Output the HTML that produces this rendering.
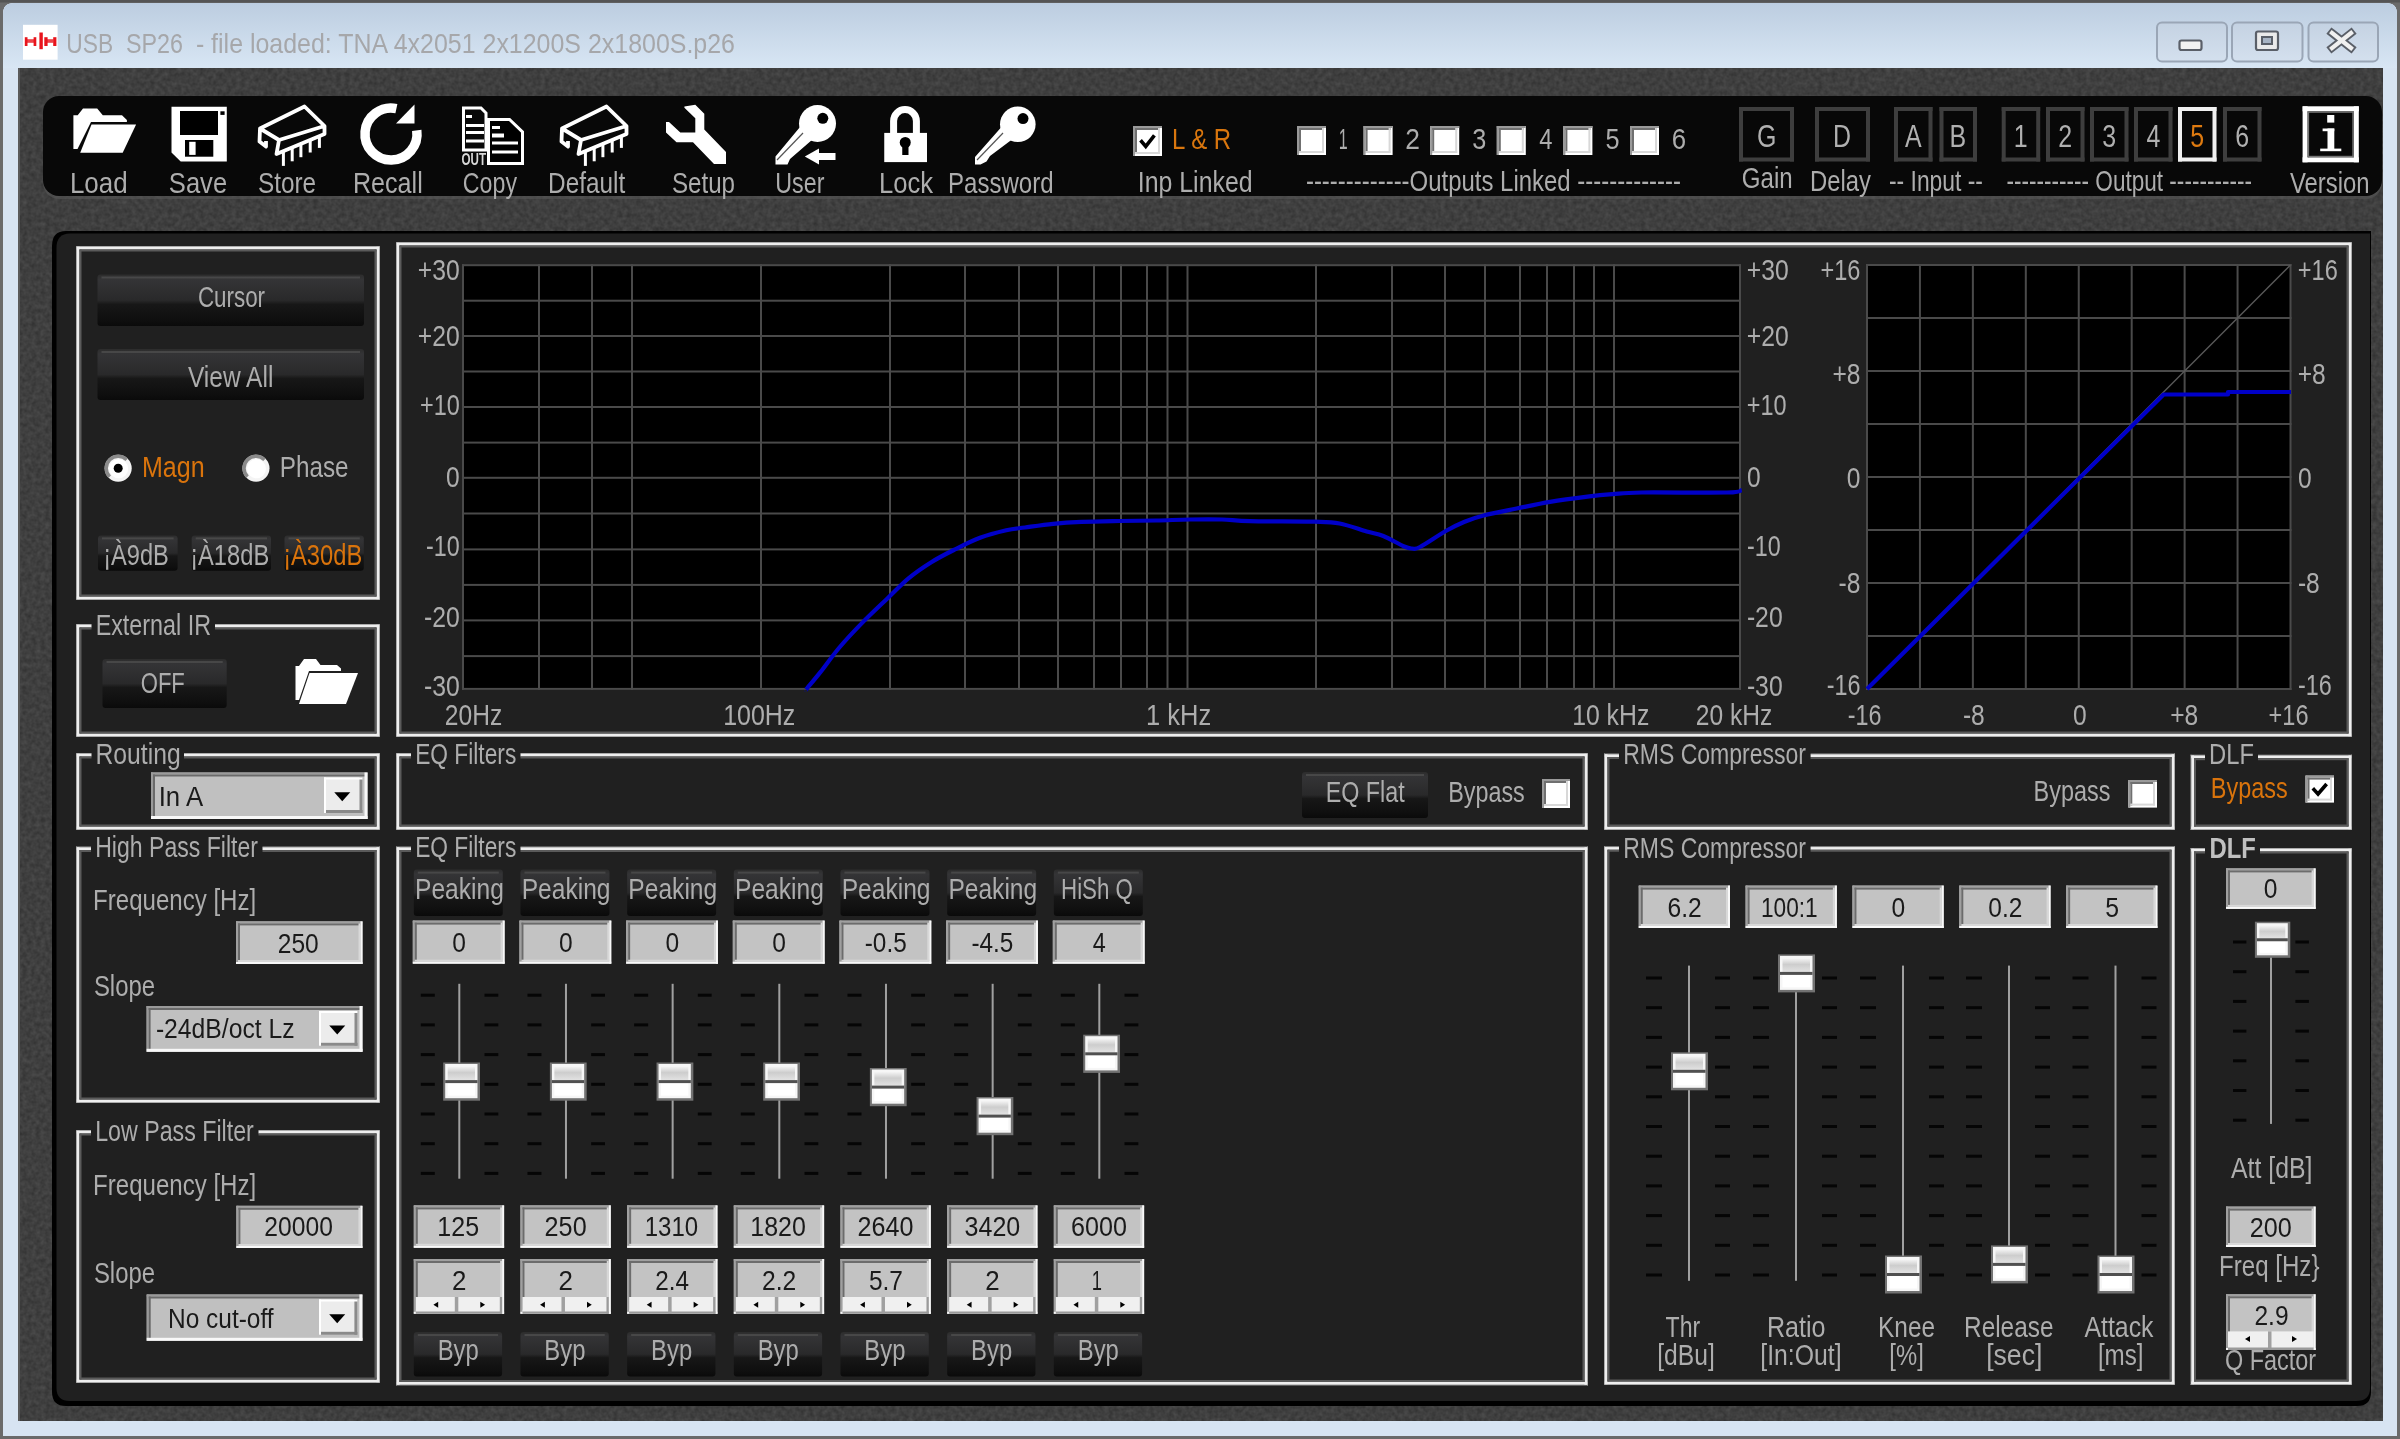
<!DOCTYPE html>
<html><head><meta charset="utf-8"><title>USB SP26</title>
<style>html,body{margin:0;padding:0;background:#7a7a7a;overflow:hidden}svg{display:block;will-change:transform}text{font-family:"Liberation Sans",sans-serif}</style>
</head><body>
<svg width="2400" height="1439" viewBox="0 0 2400 1439">
<defs>
<linearGradient id="gtitle" x1="0" y1="0" x2="0" y2="1"><stop offset="0" stop-color="#bccde0"/><stop offset="1" stop-color="#d8e6f4"/></linearGradient>
<linearGradient id="gtbtn" x1="0" y1="0" x2="0" y2="1"><stop offset="0" stop-color="#c4d2e2"/><stop offset="1" stop-color="#d4e0ee"/></linearGradient>
<linearGradient id="gbtn" x1="0" y1="0" x2="0" y2="1"><stop offset="0" stop-color="#2c2c2c"/><stop offset="0.1" stop-color="#343436"/><stop offset="0.5" stop-color="#29292a"/><stop offset="0.58" stop-color="#171717"/><stop offset="0.88" stop-color="#0f0f0f"/><stop offset="1" stop-color="#0a0a0a"/></linearGradient>
<linearGradient id="gthumb" x1="0" y1="0" x2="0" y2="1"><stop offset="0" stop-color="#f4f4f4"/><stop offset="0.45" stop-color="#cdcdcd"/><stop offset="1" stop-color="#e2e2e2"/></linearGradient>
<filter id="noise" x="0" y="0" width="100%" height="100%"><feTurbulence type="fractalNoise" baseFrequency="0.22" numOctaves="2" seed="3"/><feColorMatrix type="matrix" values="0 0 0 0 0  0 0 0 0 0  0 0 0 0 0  0 0 0 -1.2 1.1"/></filter>
</defs>
<rect x="0" y="0" width="2400" height="1439" fill="#6a6a6a"/>
<rect x="0" y="0" width="2400" height="2.5" fill="#545454"/>
<path d="M3,14 Q3,3 14,3 L2386,3 Q2397,3 2397,14 L2397,1436 L3,1436 Z" fill="#d7e4f2"/>
<path d="M4,14 Q4,4 14,4 L2386,4 Q2396,4 2396,14" fill="none" stroke="#dfe8f1" stroke-width="1.5"/>
<path d="M3,14 Q3,3 14,3 L2386,3 Q2397,3 2397,14 L2397,68 L3,68 Z" fill="url(#gtitle)"/>
<rect x="18" y="68" width="2365" height="1353" fill="#4d4d4d"/>
<rect x="18" y="68" width="2365" height="1353" fill="#000"  filter="url(#noise)" opacity="0.35"/>
<rect x="18" y="68" width="2" height="1353" fill="#5a5a5a"/>
<rect x="23" y="24.8" width="34.6" height="34.9" fill="#ffffff"/>
<rect x="24.8" y="37.2" width="2.7" height="8.8" fill="#e8141c"/>
<rect x="27" y="39.2" width="7" height="3.6" fill="#e8141c" opacity="0.8"/>
<rect x="33.6" y="37.2" width="2.7" height="8.8" fill="#e8141c"/>
<rect x="39.4" y="32.5" width="3.4" height="16.7" fill="#e8141c"/>
<rect x="44.3" y="37.2" width="3.3" height="8.8" fill="#e8141c"/>
<rect x="47" y="39.2" width="6.5" height="3.6" fill="#e8141c" opacity="0.8"/>
<rect x="53.2" y="37.2" width="3.2" height="8.8" fill="#e8141c"/>
<text x="66.29" y="52.5" font-size="27.54" fill="#a6a7aa" textLength="46.88" lengthAdjust="spacingAndGlyphs">USB</text>
<text x="125.95" y="52.5" font-size="27.54" fill="#a6a7aa" textLength="57.01" lengthAdjust="spacingAndGlyphs">SP26</text>
<text x="195.88" y="52.5" font-size="27.54" fill="#a6a7aa" textLength="539.1" lengthAdjust="spacingAndGlyphs">- file loaded: TNA 4x2051 2x1200S 2x1800S.p26</text>
<rect x="2157" y="22.5" width="70" height="39" rx="5" fill="url(#gtbtn)" stroke="#9aa6b6" stroke-width="2"/>
<rect x="2232" y="22.5" width="70.5" height="39" rx="5" fill="url(#gtbtn)" stroke="#9aa6b6" stroke-width="2"/>
<rect x="2308.5" y="22.5" width="69.5" height="39" rx="5" fill="url(#gtbtn)" stroke="#9aa6b6" stroke-width="2"/>
<rect x="2179.5" y="40.5" width="22" height="9.5" rx="2" fill="#f2f2f2" stroke="#5a5f68" stroke-width="2.2"/>
<rect x="2256" y="31.5" width="22" height="18.5" rx="2" fill="#eaeaea" stroke="#5a5f68" stroke-width="2.2"/>
<rect x="2262" y="37" width="10" height="7" fill="#a8b4c4" stroke="#5a5f68" stroke-width="2"/>
<path d="M2332,33 L2351,48 M2351,33 L2332,48" fill="none" stroke="#5a5f68" stroke-width="8" stroke-linecap="square"/>
<path d="M2332,33 L2351,48 M2351,33 L2332,48" fill="none" stroke="#f0f0f0" stroke-width="4.2" stroke-linecap="square"/>
<rect x="43" y="96" width="2339" height="103" rx="16" fill="#5a5a5a" opacity="0.5"/>
<rect x="43" y="96" width="2339" height="100" rx="16" fill="#080808"/>
<polygon points="73.4,115.2 77.7,115.2 83,108.5 97.2,108.5 102.8,115.2 122,115.2 126.9,120 126.9,122 91,122 77.5,149 73.4,149" fill="#ffffff"/>
<polygon points="91.5,124.5 136.1,124.5 122.7,152.8 80.2,152.8" fill="#ffffff"/>
<text x="69.92" y="193" font-size="28.99" fill="#adadad" textLength="57.76" lengthAdjust="spacingAndGlyphs">Load</text>
<polygon points="171.5,106.7 226.8,106.7 226.8,161.6 180.7,161.6 171.5,152.4" fill="#ffffff"/>
<rect x="180" y="111" width="38" height="24" fill="#000"/>
<rect x="220.4" y="111.3" width="4.2" height="3.6" fill="#000"/>
<rect x="185" y="140" width="28.3" height="16.7" fill="#000"/>
<rect x="189.2" y="141.8" width="6.4" height="13.1" fill="#ffffff"/>
<text x="168.85" y="193" font-size="28.99" fill="#adadad" textLength="58.29" lengthAdjust="spacingAndGlyphs">Save</text>
<path d="M260,128.5 L304.5,106.5 L324.5,126 L279,140 Z M279,140 L276.5,154 L324.5,134 L324.5,126 M260,128.5 L259.5,141.5 L266,146.5 L266,141" fill="none" stroke="#ffffff" stroke-width="3.8" stroke-linejoin="round"/>
<line x1="283.4" y1="151.28" x2="283.4" y2="165.9" stroke="#ffffff" stroke-width="3"/>
<line x1="292.2" y1="147.81" x2="292.2" y2="161.3" stroke="#ffffff" stroke-width="3"/>
<line x1="300.9" y1="144.39" x2="300.9" y2="157.2" stroke="#ffffff" stroke-width="3"/>
<line x1="310.2" y1="140.72" x2="310.2" y2="152.5" stroke="#ffffff" stroke-width="3"/>
<line x1="319.4" y1="137.1" x2="319.4" y2="147.9" stroke="#ffffff" stroke-width="3"/>
<text x="257.9" y="193" font-size="28.99" fill="#adadad" textLength="58.2" lengthAdjust="spacingAndGlyphs">Store</text>
<path d="M416.75,130.38 A26,26 0 1 1 396.41,108.57" fill="none" stroke="#ffffff" stroke-width="9.5"/>
<polygon points="396,123.5 414.5,123.5 414.5,104.5" fill="#ffffff"/>
<text x="352.99" y="193" font-size="28.99" fill="#adadad" textLength="69.74" lengthAdjust="spacingAndGlyphs">Recall</text>
<path d="M463.5,108 L481,108 L486,113 L486,150 L463.5,150 Z" fill="none" stroke="#ffffff" stroke-width="3"/>
<line x1="466" y1="116.5" x2="472" y2="116.5" stroke="#ffffff" stroke-width="3"/>
<line x1="466" y1="125.5" x2="484" y2="125.5" stroke="#ffffff" stroke-width="3"/>
<line x1="466" y1="132.5" x2="484" y2="132.5" stroke="#ffffff" stroke-width="3"/>
<line x1="466" y1="141" x2="484" y2="141" stroke="#ffffff" stroke-width="3"/>
<text x="461.53" y="164.8" font-size="15.94" fill="#d8d8d8" font-weight="bold" textLength="24.59" lengthAdjust="spacingAndGlyphs">OUT</text>
<path d="M488.5,119.5 L509.5,119.5 L522.5,132 L522.5,163.5 L488.5,163.5 Z" fill="#000" stroke="#ffffff" stroke-width="3"/>
<line x1="492" y1="127.5" x2="500" y2="127.5" stroke="#ffffff" stroke-width="3"/>
<line x1="492" y1="135.5" x2="504" y2="135.5" stroke="#ffffff" stroke-width="4"/>
<line x1="492" y1="143" x2="518" y2="143" stroke="#ffffff" stroke-width="3"/>
<line x1="492" y1="152" x2="518" y2="152" stroke="#ffffff" stroke-width="3"/>
<text x="462.84" y="193" font-size="28.99" fill="#adadad" textLength="54.15" lengthAdjust="spacingAndGlyphs">Copy</text>
<path d="M562,128.5 L606.5,106.5 L626.5,126 L581,140 Z M581,140 L578.5,154 L626.5,134 L626.5,126 M562,128.5 L561.5,141.5 L568,146.5 L568,141" fill="none" stroke="#ffffff" stroke-width="3.8" stroke-linejoin="round"/>
<line x1="585.4" y1="151.28" x2="585.4" y2="165.9" stroke="#ffffff" stroke-width="3"/>
<line x1="594.2" y1="147.81" x2="594.2" y2="161.3" stroke="#ffffff" stroke-width="3"/>
<line x1="602.9" y1="144.39" x2="602.9" y2="157.2" stroke="#ffffff" stroke-width="3"/>
<line x1="612.2" y1="140.72" x2="612.2" y2="152.5" stroke="#ffffff" stroke-width="3"/>
<line x1="621.4" y1="137.1" x2="621.4" y2="147.9" stroke="#ffffff" stroke-width="3"/>
<text x="548.05" y="193" font-size="28.99" fill="#adadad" textLength="77.16" lengthAdjust="spacingAndGlyphs">Default</text>
<polygon points="684.4,106.6 695.3,104.75 704.3,113.75 704.3,129.5 726,152 726,164 714,164 693,142.3 676.5,142.3 666,132.5 666,122 669,122 680.3,132.5 695.3,132.5 695.3,118.25 684.4,107.75" fill="#ffffff"/>
<text x="671.91" y="193" font-size="28.99" fill="#adadad" textLength="63.13" lengthAdjust="spacingAndGlyphs">Setup</text>
<circle cx="817.5" cy="123.5" r="18.5" fill="#fff"/>
<circle cx="822.8" cy="118.3" r="5.5" fill="#000"/>
<polygon points="800,127 812.5,139.5 790,159 787.5,164.5 775.5,164.5 775.5,156.5" fill="#ffffff"/>
<line x1="777" y1="160" x2="803" y2="133" stroke="#555" stroke-width="1.2"/>
<polygon points="804.8,156.5 819,148.5 819,164.5" fill="#ffffff"/>
<rect x="818" y="153" width="17.5" height="7" fill="#ffffff"/>
<text x="775.25" y="193" font-size="28.99" fill="#adadad" textLength="49.13" lengthAdjust="spacingAndGlyphs">User</text>
<rect x="884.25" y="132.9" width="42.75" height="29.2" fill="#ffffff"/>
<path d="M893.6,133 L893.6,121 A11.4,11.4 0 0 1 916.4,121 L916.4,133" fill="none" stroke="#ffffff" stroke-width="7"/>
<circle cx="905.25" cy="142.5" r="5.5" fill="#000"/>
<rect x="902.25" y="142" width="6.25" height="13" fill="#000"/>
<text x="878.95" y="193" font-size="28.99" fill="#adadad" textLength="54.11" lengthAdjust="spacingAndGlyphs">Lock</text>
<circle cx="1017.8" cy="124.3" r="17.8" fill="#fff"/>
<circle cx="1023" cy="118.6" r="5.5" fill="#000"/>
<polygon points="1001,127.5 1012,139.5 990,156 986.5,161.5 980.5,164.5 975,164.5 975,157" fill="#ffffff"/>
<line x1="977" y1="160" x2="1003" y2="133" stroke="#555" stroke-width="1.2"/>
<text x="948.08" y="193" font-size="28.99" fill="#adadad" textLength="105.5" lengthAdjust="spacingAndGlyphs">Password</text>
<rect x="1133" y="126" width="29" height="30" fill="#ffffff"/>
<rect x="1133" y="126" width="29" height="2" fill="#9a9a9a"/>
<rect x="1133" y="126" width="2" height="30" fill="#9a9a9a"/>
<rect x="1135" y="128" width="25" height="2" fill="#707070"/>
<rect x="1135" y="128" width="2" height="26" fill="#707070"/>
<rect x="1135" y="152" width="25" height="2" fill="#d8d8d8"/>
<rect x="1158" y="128" width="2" height="26" fill="#d8d8d8"/>
<path d="M1141.7,141.6 L1145.76,146.4 L1153.3,136.8" fill="none" stroke="#000" stroke-width="3.6" stroke-linecap="square"/>
<text x="1172.08" y="149" font-size="29.71" fill="#d9760e" textLength="59.09" lengthAdjust="spacingAndGlyphs">L &amp; R</text>
<text x="1137.76" y="191.6" font-size="28.99" fill="#adadad" textLength="114.85" lengthAdjust="spacingAndGlyphs">Inp Linked</text>
<rect x="1297" y="126" width="29" height="29" fill="#ffffff"/>
<rect x="1297" y="126" width="29" height="2" fill="#9a9a9a"/>
<rect x="1297" y="126" width="2" height="29" fill="#9a9a9a"/>
<rect x="1299" y="128" width="25" height="2" fill="#707070"/>
<rect x="1299" y="128" width="2" height="25" fill="#707070"/>
<rect x="1299" y="151" width="25" height="2" fill="#d8d8d8"/>
<rect x="1322" y="128" width="2" height="25" fill="#d8d8d8"/>
<text x="1338.79" y="149" font-size="29.71" fill="#adadad" textLength="8.95" lengthAdjust="spacingAndGlyphs">1</text>
<rect x="1363.6" y="126" width="29" height="29" fill="#ffffff"/>
<rect x="1363.6" y="126" width="29" height="2" fill="#9a9a9a"/>
<rect x="1363.6" y="126" width="2" height="29" fill="#9a9a9a"/>
<rect x="1365.6" y="128" width="25" height="2" fill="#707070"/>
<rect x="1365.6" y="128" width="2" height="25" fill="#707070"/>
<rect x="1365.6" y="151" width="25" height="2" fill="#d8d8d8"/>
<rect x="1388.6" y="128" width="2" height="25" fill="#d8d8d8"/>
<text x="1405.28" y="149" font-size="29.71" fill="#adadad" textLength="14.67" lengthAdjust="spacingAndGlyphs">2</text>
<rect x="1430.2" y="126" width="29" height="29" fill="#ffffff"/>
<rect x="1430.2" y="126" width="29" height="2" fill="#9a9a9a"/>
<rect x="1430.2" y="126" width="2" height="29" fill="#9a9a9a"/>
<rect x="1432.2" y="128" width="25" height="2" fill="#707070"/>
<rect x="1432.2" y="128" width="2" height="25" fill="#707070"/>
<rect x="1432.2" y="151" width="25" height="2" fill="#d8d8d8"/>
<rect x="1455.2" y="128" width="2" height="25" fill="#d8d8d8"/>
<text x="1472.19" y="149" font-size="29.71" fill="#adadad" textLength="14.05" lengthAdjust="spacingAndGlyphs">3</text>
<rect x="1496.8" y="126" width="29" height="29" fill="#ffffff"/>
<rect x="1496.8" y="126" width="29" height="2" fill="#9a9a9a"/>
<rect x="1496.8" y="126" width="2" height="29" fill="#9a9a9a"/>
<rect x="1498.8" y="128" width="25" height="2" fill="#707070"/>
<rect x="1498.8" y="128" width="2" height="25" fill="#707070"/>
<rect x="1498.8" y="151" width="25" height="2" fill="#d8d8d8"/>
<rect x="1521.8" y="128" width="2" height="25" fill="#d8d8d8"/>
<text x="1539.32" y="149" font-size="29.71" fill="#adadad" textLength="13.22" lengthAdjust="spacingAndGlyphs">4</text>
<rect x="1563.4" y="126" width="29" height="29" fill="#ffffff"/>
<rect x="1563.4" y="126" width="29" height="2" fill="#9a9a9a"/>
<rect x="1563.4" y="126" width="2" height="29" fill="#9a9a9a"/>
<rect x="1565.4" y="128" width="25" height="2" fill="#707070"/>
<rect x="1565.4" y="128" width="2" height="25" fill="#707070"/>
<rect x="1565.4" y="151" width="25" height="2" fill="#d8d8d8"/>
<rect x="1588.4" y="128" width="2" height="25" fill="#d8d8d8"/>
<text x="1605.39" y="149" font-size="29.71" fill="#adadad" textLength="14.05" lengthAdjust="spacingAndGlyphs">5</text>
<rect x="1630" y="126" width="29" height="29" fill="#ffffff"/>
<rect x="1630" y="126" width="29" height="2" fill="#9a9a9a"/>
<rect x="1630" y="126" width="2" height="29" fill="#9a9a9a"/>
<rect x="1632" y="128" width="25" height="2" fill="#707070"/>
<rect x="1632" y="128" width="2" height="25" fill="#707070"/>
<rect x="1632" y="151" width="25" height="2" fill="#d8d8d8"/>
<rect x="1655" y="128" width="2" height="25" fill="#d8d8d8"/>
<text x="1671.71" y="149" font-size="29.71" fill="#adadad" textLength="14.35" lengthAdjust="spacingAndGlyphs">6</text>
<text x="1305.92" y="190.6" font-size="28.99" fill="#adadad" textLength="375.12" lengthAdjust="spacingAndGlyphs">-------------Outputs Linked -------------</text>
<rect x="1739" y="107" width="55" height="4" fill="#3e3e3e"/>
<rect x="1739" y="157.5" width="55" height="4" fill="#3e3e3e"/>
<rect x="1739" y="107" width="4" height="54.5" fill="#3e3e3e"/>
<rect x="1790" y="107" width="4" height="54.5" fill="#3e3e3e"/>
<text x="1757.08" y="146.7" font-size="30.43" fill="#b0b0b0" textLength="19.41" lengthAdjust="spacingAndGlyphs">G</text>
<rect x="1815" y="107" width="55" height="4" fill="#3e3e3e"/>
<rect x="1815" y="157.5" width="55" height="4" fill="#3e3e3e"/>
<rect x="1815" y="107" width="4" height="54.5" fill="#3e3e3e"/>
<rect x="1866" y="107" width="4" height="54.5" fill="#3e3e3e"/>
<text x="1833.08" y="146.7" font-size="30.43" fill="#b0b0b0" textLength="18.02" lengthAdjust="spacingAndGlyphs">D</text>
<rect x="1894" y="107" width="38.5" height="4" fill="#3e3e3e"/>
<rect x="1894" y="157.5" width="38.5" height="4" fill="#3e3e3e"/>
<rect x="1894" y="107" width="4" height="54.5" fill="#3e3e3e"/>
<rect x="1928.5" y="107" width="4" height="54.5" fill="#3e3e3e"/>
<text x="1904.95" y="146.7" font-size="30.43" fill="#b0b0b0" textLength="16.65" lengthAdjust="spacingAndGlyphs">A</text>
<rect x="1939.5" y="107" width="37.5" height="4" fill="#3e3e3e"/>
<rect x="1939.5" y="157.5" width="37.5" height="4" fill="#3e3e3e"/>
<rect x="1939.5" y="107" width="4" height="54.5" fill="#3e3e3e"/>
<rect x="1973" y="107" width="4" height="54.5" fill="#3e3e3e"/>
<text x="1949.58" y="146.7" font-size="30.43" fill="#b0b0b0" textLength="16.65" lengthAdjust="spacingAndGlyphs">B</text>
<rect x="2001.7" y="107" width="38.5" height="4" fill="#3e3e3e"/>
<rect x="2001.7" y="157.5" width="38.5" height="4" fill="#3e3e3e"/>
<rect x="2001.7" y="107" width="4" height="54.5" fill="#3e3e3e"/>
<rect x="2036.2" y="107" width="4" height="54.5" fill="#3e3e3e"/>
<text x="2013.65" y="146.7" font-size="30.43" fill="#b0b0b0" textLength="13.88" lengthAdjust="spacingAndGlyphs">1</text>
<rect x="2046" y="107" width="38.5" height="4" fill="#3e3e3e"/>
<rect x="2046" y="157.5" width="38.5" height="4" fill="#3e3e3e"/>
<rect x="2046" y="107" width="4" height="54.5" fill="#3e3e3e"/>
<rect x="2080.5" y="107" width="4" height="54.5" fill="#3e3e3e"/>
<text x="2058.32" y="146.7" font-size="30.43" fill="#b0b0b0" textLength="13.88" lengthAdjust="spacingAndGlyphs">2</text>
<rect x="2090" y="107" width="38.5" height="4" fill="#3e3e3e"/>
<rect x="2090" y="157.5" width="38.5" height="4" fill="#3e3e3e"/>
<rect x="2090" y="107" width="4" height="54.5" fill="#3e3e3e"/>
<rect x="2124.5" y="107" width="4" height="54.5" fill="#3e3e3e"/>
<text x="2102.32" y="146.7" font-size="30.43" fill="#b0b0b0" textLength="13.88" lengthAdjust="spacingAndGlyphs">3</text>
<rect x="2134" y="107" width="38.5" height="4" fill="#3e3e3e"/>
<rect x="2134" y="157.5" width="38.5" height="4" fill="#3e3e3e"/>
<rect x="2134" y="107" width="4" height="54.5" fill="#3e3e3e"/>
<rect x="2168.5" y="107" width="4" height="54.5" fill="#3e3e3e"/>
<text x="2146.45" y="146.7" font-size="30.43" fill="#b0b0b0" textLength="13.88" lengthAdjust="spacingAndGlyphs">4</text>
<rect x="2178" y="107" width="38.5" height="4" fill="#f0f0f0"/>
<rect x="2178" y="157.5" width="38.5" height="4" fill="#f0f0f0"/>
<rect x="2178" y="107" width="4" height="54.5" fill="#f0f0f0"/>
<rect x="2212.5" y="107" width="4" height="54.5" fill="#f0f0f0"/>
<text x="2190.32" y="146.7" font-size="30.43" fill="#dd7a10" textLength="13.88" lengthAdjust="spacingAndGlyphs">5</text>
<rect x="2223" y="107" width="38.5" height="4" fill="#3e3e3e"/>
<rect x="2223" y="157.5" width="38.5" height="4" fill="#3e3e3e"/>
<rect x="2223" y="107" width="4" height="54.5" fill="#3e3e3e"/>
<rect x="2257.5" y="107" width="4" height="54.5" fill="#3e3e3e"/>
<text x="2235.2" y="146.7" font-size="30.43" fill="#b0b0b0" textLength="13.88" lengthAdjust="spacingAndGlyphs">6</text>
<text x="1741.8" y="188.4" font-size="28.99" fill="#adadad" textLength="50.82" lengthAdjust="spacingAndGlyphs">Gain</text>
<text x="1810.09" y="191" font-size="28.99" fill="#adadad" textLength="60.95" lengthAdjust="spacingAndGlyphs">Delay</text>
<text x="1888.97" y="191" font-size="28.99" fill="#adadad" textLength="93.99" lengthAdjust="spacingAndGlyphs">-- Input --</text>
<text x="2006.48" y="191" font-size="28.99" fill="#adadad" textLength="245.52" lengthAdjust="spacingAndGlyphs">----------- Output -----------</text>
<rect x="2302.6" y="106.3" width="56.2" height="5" fill="#ffffff"/>
<rect x="2302.6" y="157.3" width="56.2" height="5" fill="#ffffff"/>
<rect x="2302.6" y="106.3" width="5" height="56" fill="#ffffff"/>
<rect x="2353.8" y="106.3" width="5" height="56" fill="#ffffff"/>
<rect x="2307.6" y="111.3" width="46.2" height="1.5" fill="#777777"/>
<rect x="2307.6" y="155.8" width="46.2" height="1.5" fill="#777777"/>
<rect x="2307.6" y="111.3" width="1.5" height="46" fill="#777777"/>
<rect x="2352.3" y="111.3" width="1.5" height="46" fill="#777777"/>
<rect x="2327.2" y="115" width="7.1" height="7.6" fill="#ffffff"/>
<rect x="2327.5" y="128.5" width="6.8" height="21" fill="#ffffff"/>
<rect x="2322.6" y="128.5" width="11.7" height="2.7" fill="#ffffff"/>
<rect x="2320.2" y="148.6" width="21.1" height="2.6" fill="#ffffff"/>
<text x="2289.88" y="192.5" font-size="28.99" fill="#adadad" textLength="79.69" lengthAdjust="spacingAndGlyphs">Version</text>
<path d="M52,246 Q52,231 66,231 L2371,231 L2371,1392 Q2371,1406 2357,1406 L66,1406 Q52,1406 52,1392 Z" fill="#000"/>
<path d="M56.5,248 Q56.5,233.5 70,233.5 L2370,233.5 L2370,1388 Q2370,1401 2356,1401 L70,1401 Q56.5,1401 56.5,1388 Z" fill="#202020"/>
<rect x="76" y="246" width="304" height="1" fill="#9a9a9a"/>
<rect x="76" y="599" width="304" height="1" fill="#9a9a9a"/>
<rect x="76" y="246" width="1" height="354" fill="#9a9a9a"/>
<rect x="379" y="246" width="1" height="354" fill="#9a9a9a"/>
<rect x="76.8" y="246.8" width="302.4" height="2.7" fill="#eeeeee"/>
<rect x="76.8" y="596.5" width="302.4" height="2.7" fill="#eeeeee"/>
<rect x="76.8" y="246.8" width="2.7" height="352.4" fill="#eeeeee"/>
<rect x="376.5" y="246.8" width="2.7" height="352.4" fill="#eeeeee"/>
<rect x="79.5" y="249.5" width="297" height="2" fill="#5a5a5a"/>
<rect x="79.5" y="594.5" width="297" height="2" fill="#5a5a5a"/>
<rect x="79.5" y="249.5" width="2" height="347" fill="#5a5a5a"/>
<rect x="374.5" y="249.5" width="2" height="347" fill="#5a5a5a"/>
<rect x="97.5" y="274.5" width="266.5" height="51.5" rx="3" fill="url(#gbtn)"/>
<rect x="101.5" y="276.5" width="258.5" height="2" fill="#4a4a4a" opacity="0.9"/>
<text x="197.88" y="306.6" font-size="28.99" fill="#adadad" textLength="67.17" lengthAdjust="spacingAndGlyphs">Cursor</text>
<rect x="97.5" y="349" width="266.5" height="51" rx="3" fill="url(#gbtn)"/>
<rect x="101.5" y="351" width="258.5" height="2" fill="#4a4a4a" opacity="0.9"/>
<text x="187.88" y="386.6" font-size="28.99" fill="#adadad" textLength="85.51" lengthAdjust="spacingAndGlyphs">View All</text>
<circle cx="118.2" cy="468.2" r="13.5" fill="#f4f4f4"/>
<path d="M109.7,476.7 A12,12 0 0 1 126.7,459.7" stroke="#8a8a8a" stroke-width="3.5" fill="none"/>
<circle cx="118.7" cy="468.7" r="9.5" fill="#ffffff"/>
<circle cx="118.2" cy="468.2" r="4.5" fill="#000"/>
<circle cx="256" cy="468.2" r="13.5" fill="#f4f4f4"/>
<path d="M247.5,476.7 A12,12 0 0 1 264.5,459.7" stroke="#8a8a8a" stroke-width="3.5" fill="none"/>
<circle cx="256.5" cy="468.7" r="9.5" fill="#ffffff"/>
<text x="142" y="477.4" font-size="28.99" fill="#da740c" textLength="62.67" lengthAdjust="spacingAndGlyphs">Magn</text>
<text x="279.76" y="477.4" font-size="28.99" fill="#adadad" textLength="68.85" lengthAdjust="spacingAndGlyphs">Phase</text>
<rect x="98" y="535.4" width="79.6" height="35.4" rx="3" fill="url(#gbtn)"/>
<rect x="102" y="537.4" width="71.6" height="2" fill="#4a4a4a" opacity="0.9"/>
<text x="103.16" y="564.5" font-size="29.71" fill="#adadad" textLength="65.73" lengthAdjust="spacingAndGlyphs">¡À9dB</text>
<rect x="191.7" y="535.4" width="79.3" height="35.4" rx="3" fill="url(#gbtn)"/>
<rect x="195.7" y="537.4" width="71.3" height="2" fill="#4a4a4a" opacity="0.9"/>
<text x="190.16" y="564.5" font-size="29.71" fill="#adadad" textLength="79.04" lengthAdjust="spacingAndGlyphs">¡À18dB</text>
<rect x="284.5" y="535.4" width="79.3" height="35.4" rx="3" fill="url(#gbtn)"/>
<rect x="288.5" y="537.4" width="71.3" height="2" fill="#4a4a4a" opacity="0.9"/>
<text x="283.16" y="564.5" font-size="29.71" fill="#da740c" textLength="79.04" lengthAdjust="spacingAndGlyphs">¡À30dB</text>
<rect x="76" y="624" width="15.5" height="1" fill="#9a9a9a"/>
<rect x="215" y="624" width="165" height="1" fill="#9a9a9a"/>
<rect x="76" y="736" width="304" height="1" fill="#9a9a9a"/>
<rect x="76" y="624" width="1" height="113" fill="#9a9a9a"/>
<rect x="379" y="624" width="1" height="113" fill="#9a9a9a"/>
<rect x="76.8" y="624.8" width="14.7" height="2.7" fill="#eeeeee"/>
<rect x="215" y="624.8" width="164.2" height="2.7" fill="#eeeeee"/>
<rect x="76.8" y="733.5" width="302.4" height="2.7" fill="#eeeeee"/>
<rect x="76.8" y="624.8" width="2.7" height="111.4" fill="#eeeeee"/>
<rect x="376.5" y="624.8" width="2.7" height="111.4" fill="#eeeeee"/>
<rect x="79.5" y="627.5" width="12" height="2" fill="#5a5a5a"/>
<rect x="215" y="627.5" width="161.5" height="2" fill="#5a5a5a"/>
<rect x="79.5" y="731.5" width="297" height="2" fill="#5a5a5a"/>
<rect x="79.5" y="627.5" width="2" height="106" fill="#5a5a5a"/>
<rect x="374.5" y="627.5" width="2" height="106" fill="#5a5a5a"/>
<text x="95.63" y="635" font-size="28.99" fill="#adadad" textLength="115.45" lengthAdjust="spacingAndGlyphs">External IR</text>
<rect x="102.5" y="659" width="124.2" height="49" rx="3" fill="url(#gbtn)"/>
<rect x="106.5" y="661" width="116.2" height="2" fill="#4a4a4a" opacity="0.9"/>
<text x="140.71" y="692.5" font-size="28.99" fill="#adadad" textLength="44.17" lengthAdjust="spacingAndGlyphs">OFF</text>
<polygon points="295.5,666 299,666 304,659 316,659 320.5,665 337,665 341,668.5 341,671 309,671 299,700 295.5,700" fill="#fff"/>
<polygon points="309.5,673 358,673 346,704 299,704" fill="#fff"/>
<rect x="76" y="753" width="15.5" height="1" fill="#9a9a9a"/>
<rect x="184" y="753" width="196" height="1" fill="#9a9a9a"/>
<rect x="76" y="829" width="304" height="1" fill="#9a9a9a"/>
<rect x="76" y="753" width="1" height="77" fill="#9a9a9a"/>
<rect x="379" y="753" width="1" height="77" fill="#9a9a9a"/>
<rect x="76.8" y="753.8" width="14.7" height="2.7" fill="#eeeeee"/>
<rect x="184" y="753.8" width="195.2" height="2.7" fill="#eeeeee"/>
<rect x="76.8" y="826.5" width="302.4" height="2.7" fill="#eeeeee"/>
<rect x="76.8" y="753.8" width="2.7" height="75.4" fill="#eeeeee"/>
<rect x="376.5" y="753.8" width="2.7" height="75.4" fill="#eeeeee"/>
<rect x="79.5" y="756.5" width="12" height="2" fill="#5a5a5a"/>
<rect x="184" y="756.5" width="192.5" height="2" fill="#5a5a5a"/>
<rect x="79.5" y="824.5" width="297" height="2" fill="#5a5a5a"/>
<rect x="79.5" y="756.5" width="2" height="70" fill="#5a5a5a"/>
<rect x="374.5" y="756.5" width="2" height="70" fill="#5a5a5a"/>
<text x="95.52" y="764" font-size="28.99" fill="#adadad" textLength="85.13" lengthAdjust="spacingAndGlyphs">Routing</text>
<rect x="151" y="772.5" width="216.5" height="46.5" fill="#c0c0c0"/>
<rect x="151" y="772.5" width="216.5" height="2" fill="#9a9a9a"/>
<rect x="151" y="772.5" width="2" height="46.5" fill="#9a9a9a"/>
<rect x="153" y="774.5" width="212.5" height="2" fill="#6a6a6a"/>
<rect x="153" y="774.5" width="2" height="42.5" fill="#6a6a6a"/>
<rect x="151" y="816" width="216.5" height="3" fill="#f8f8f8"/>
<rect x="364.5" y="772.5" width="3" height="46.5" fill="#f8f8f8"/>
<rect x="324" y="777.5" width="38.5" height="35.5" fill="#ececec"/>
<rect x="324" y="810" width="38.5" height="3" fill="#8a8a8a"/>
<rect x="359.5" y="777.5" width="3" height="35.5" fill="#8a8a8a"/>
<rect x="324" y="777.5" width="2" height="35.5" fill="#ffffff"/>
<rect x="324" y="777.5" width="38.5" height="2" fill="#ffffff"/>
<polygon points="334.25,792.25 350.25,792.25 342.25,801.25" fill="#000"/>
<text x="158.68" y="806" font-size="28.26" fill="#1a1a1a" textLength="44.41" lengthAdjust="spacingAndGlyphs">In A</text>
<rect x="76" y="846.5" width="15" height="1" fill="#9a9a9a"/>
<rect x="262.5" y="846.5" width="117.5" height="1" fill="#9a9a9a"/>
<rect x="76" y="1102" width="304" height="1" fill="#9a9a9a"/>
<rect x="76" y="846.5" width="1" height="256.5" fill="#9a9a9a"/>
<rect x="379" y="846.5" width="1" height="256.5" fill="#9a9a9a"/>
<rect x="76.8" y="847.3" width="14.2" height="2.7" fill="#eeeeee"/>
<rect x="262.5" y="847.3" width="116.7" height="2.7" fill="#eeeeee"/>
<rect x="76.8" y="1099.5" width="302.4" height="2.7" fill="#eeeeee"/>
<rect x="76.8" y="847.3" width="2.7" height="254.9" fill="#eeeeee"/>
<rect x="376.5" y="847.3" width="2.7" height="254.9" fill="#eeeeee"/>
<rect x="79.5" y="850" width="11.5" height="2" fill="#5a5a5a"/>
<rect x="262.5" y="850" width="114" height="2" fill="#5a5a5a"/>
<rect x="79.5" y="1097.5" width="297" height="2" fill="#5a5a5a"/>
<rect x="79.5" y="850" width="2" height="249.5" fill="#5a5a5a"/>
<rect x="374.5" y="850" width="2" height="249.5" fill="#5a5a5a"/>
<text x="95.16" y="857" font-size="28.99" fill="#adadad" textLength="162.76" lengthAdjust="spacingAndGlyphs">High Pass Filter</text>
<text x="93.08" y="909.8" font-size="28.99" fill="#adadad" textLength="163.12" lengthAdjust="spacingAndGlyphs">Frequency [Hz]</text>
<rect x="236" y="921.4" width="126.5" height="42.6" fill="#c3c3c3"/>
<rect x="236" y="921.4" width="126.5" height="2" fill="#a0a0a0"/>
<rect x="236" y="921.4" width="2" height="42.6" fill="#a0a0a0"/>
<rect x="238" y="923.4" width="122.5" height="2" fill="#6c6c6c"/>
<rect x="238" y="923.4" width="2" height="38.6" fill="#6c6c6c"/>
<rect x="236" y="962" width="126.5" height="2" fill="#f8f8f8"/>
<rect x="360.5" y="921.4" width="2" height="42.6" fill="#f8f8f8"/>
<rect x="238" y="960" width="122.5" height="2" fill="#d8d8d8"/>
<rect x="358.5" y="923.4" width="2" height="38.6" fill="#d8d8d8"/>
<text x="277.77" y="952.6" font-size="28.26" fill="#1a1a1a" textLength="40.97" lengthAdjust="spacingAndGlyphs">250</text>
<text x="93.92" y="996" font-size="28.99" fill="#adadad" textLength="61.22" lengthAdjust="spacingAndGlyphs">Slope</text>
<rect x="146.6" y="1006" width="215.9" height="45.8" fill="#c0c0c0"/>
<rect x="146.6" y="1006" width="215.9" height="2" fill="#9a9a9a"/>
<rect x="146.6" y="1006" width="2" height="45.8" fill="#9a9a9a"/>
<rect x="148.6" y="1008" width="211.9" height="2" fill="#6a6a6a"/>
<rect x="148.6" y="1008" width="2" height="41.8" fill="#6a6a6a"/>
<rect x="146.6" y="1048.8" width="215.9" height="3" fill="#f8f8f8"/>
<rect x="359.5" y="1006" width="3" height="45.8" fill="#f8f8f8"/>
<rect x="319" y="1011" width="38.5" height="34.8" fill="#ececec"/>
<rect x="319" y="1042.8" width="38.5" height="3" fill="#8a8a8a"/>
<rect x="354.5" y="1011" width="3" height="34.8" fill="#8a8a8a"/>
<rect x="319" y="1011" width="2" height="34.8" fill="#ffffff"/>
<rect x="319" y="1011" width="38.5" height="2" fill="#ffffff"/>
<polygon points="329.25,1025.4 345.25,1025.4 337.25,1034.4" fill="#000"/>
<text x="155.89" y="1038" font-size="28.26" fill="#1a1a1a" textLength="138.83" lengthAdjust="spacingAndGlyphs">-24dB/oct Lz</text>
<rect x="76" y="1130" width="15" height="1" fill="#9a9a9a"/>
<rect x="258.5" y="1130" width="121.5" height="1" fill="#9a9a9a"/>
<rect x="76" y="1382" width="304" height="1" fill="#9a9a9a"/>
<rect x="76" y="1130" width="1" height="253" fill="#9a9a9a"/>
<rect x="379" y="1130" width="1" height="253" fill="#9a9a9a"/>
<rect x="76.8" y="1130.8" width="14.2" height="2.7" fill="#eeeeee"/>
<rect x="258.5" y="1130.8" width="120.7" height="2.7" fill="#eeeeee"/>
<rect x="76.8" y="1379.5" width="302.4" height="2.7" fill="#eeeeee"/>
<rect x="76.8" y="1130.8" width="2.7" height="251.4" fill="#eeeeee"/>
<rect x="376.5" y="1130.8" width="2.7" height="251.4" fill="#eeeeee"/>
<rect x="79.5" y="1133.5" width="11.5" height="2" fill="#5a5a5a"/>
<rect x="258.5" y="1133.5" width="118" height="2" fill="#5a5a5a"/>
<rect x="79.5" y="1377.5" width="297" height="2" fill="#5a5a5a"/>
<rect x="79.5" y="1133.5" width="2" height="246" fill="#5a5a5a"/>
<rect x="374.5" y="1133.5" width="2" height="246" fill="#5a5a5a"/>
<text x="95.14" y="1141" font-size="28.99" fill="#adadad" textLength="158.72" lengthAdjust="spacingAndGlyphs">Low Pass Filter</text>
<text x="93.08" y="1194.7" font-size="28.99" fill="#adadad" textLength="163.12" lengthAdjust="spacingAndGlyphs">Frequency [Hz]</text>
<rect x="236.4" y="1205.8" width="126" height="42.2" fill="#c3c3c3"/>
<rect x="236.4" y="1205.8" width="126" height="2" fill="#a0a0a0"/>
<rect x="236.4" y="1205.8" width="2" height="42.2" fill="#a0a0a0"/>
<rect x="238.4" y="1207.8" width="122" height="2" fill="#6c6c6c"/>
<rect x="238.4" y="1207.8" width="2" height="38.2" fill="#6c6c6c"/>
<rect x="236.4" y="1246" width="126" height="2" fill="#f8f8f8"/>
<rect x="360.4" y="1205.8" width="2" height="42.2" fill="#f8f8f8"/>
<rect x="238.4" y="1244" width="122" height="2" fill="#d8d8d8"/>
<rect x="358.4" y="1207.8" width="2" height="38.2" fill="#d8d8d8"/>
<text x="264.37" y="1236" font-size="28.26" fill="#1a1a1a" textLength="68.52" lengthAdjust="spacingAndGlyphs">20000</text>
<text x="93.92" y="1283.4" font-size="28.99" fill="#adadad" textLength="61.22" lengthAdjust="spacingAndGlyphs">Slope</text>
<rect x="146.7" y="1294.5" width="215.7" height="46.3" fill="#c0c0c0"/>
<rect x="146.7" y="1294.5" width="215.7" height="2" fill="#9a9a9a"/>
<rect x="146.7" y="1294.5" width="2" height="46.3" fill="#9a9a9a"/>
<rect x="148.7" y="1296.5" width="211.7" height="2" fill="#6a6a6a"/>
<rect x="148.7" y="1296.5" width="2" height="42.3" fill="#6a6a6a"/>
<rect x="146.7" y="1337.8" width="215.7" height="3" fill="#f8f8f8"/>
<rect x="359.4" y="1294.5" width="3" height="46.3" fill="#f8f8f8"/>
<rect x="319" y="1299.5" width="38.4" height="35.3" fill="#ececec"/>
<rect x="319" y="1331.8" width="38.4" height="3" fill="#8a8a8a"/>
<rect x="354.4" y="1299.5" width="3" height="35.3" fill="#8a8a8a"/>
<rect x="319" y="1299.5" width="2" height="35.3" fill="#ffffff"/>
<rect x="319" y="1299.5" width="38.4" height="2" fill="#ffffff"/>
<polygon points="329.2,1314.15 345.2,1314.15 337.2,1323.15" fill="#000"/>
<text x="168.04" y="1327.7" font-size="28.26" fill="#1a1a1a" textLength="105.58" lengthAdjust="spacingAndGlyphs">No cut-off</text>
<rect x="396" y="242" width="1956" height="1" fill="#9a9a9a"/>
<rect x="396" y="736" width="1956" height="1" fill="#9a9a9a"/>
<rect x="396" y="242" width="1" height="495" fill="#9a9a9a"/>
<rect x="2351" y="242" width="1" height="495" fill="#9a9a9a"/>
<rect x="396.8" y="242.8" width="1954.4" height="2.7" fill="#eeeeee"/>
<rect x="396.8" y="733.5" width="1954.4" height="2.7" fill="#eeeeee"/>
<rect x="396.8" y="242.8" width="2.7" height="493.4" fill="#eeeeee"/>
<rect x="2348.5" y="242.8" width="2.7" height="493.4" fill="#eeeeee"/>
<rect x="399.5" y="245.5" width="1949" height="2" fill="#5a5a5a"/>
<rect x="399.5" y="731.5" width="1949" height="2" fill="#5a5a5a"/>
<rect x="399.5" y="245.5" width="2" height="488" fill="#5a5a5a"/>
<rect x="2346.5" y="245.5" width="2" height="488" fill="#5a5a5a"/>
<rect x="462" y="265.2" width="1279" height="424.7" fill="#000"/>
<rect x="462" y="264.2" width="1279" height="2" fill="#4a4a4a"/>
<rect x="462" y="299.7" width="1279" height="2" fill="#4a4a4a"/>
<rect x="462" y="335" width="1279" height="2" fill="#4a4a4a"/>
<rect x="462" y="370.5" width="1279" height="2" fill="#4a4a4a"/>
<rect x="462" y="406" width="1279" height="2" fill="#4a4a4a"/>
<rect x="462" y="441.6" width="1279" height="2" fill="#4a4a4a"/>
<rect x="462" y="476.8" width="1279" height="2" fill="#4a4a4a"/>
<rect x="462" y="512.5" width="1279" height="2" fill="#4a4a4a"/>
<rect x="462" y="548.4" width="1279" height="2" fill="#4a4a4a"/>
<rect x="462" y="583.9" width="1279" height="2" fill="#4a4a4a"/>
<rect x="462" y="619.4" width="1279" height="2" fill="#4a4a4a"/>
<rect x="462" y="655.1" width="1279" height="2" fill="#4a4a4a"/>
<rect x="462" y="687.9" width="1279" height="2" fill="#4a4a4a"/>
<rect x="462" y="264.2" width="2" height="425.7" fill="#4a4a4a"/>
<rect x="538" y="264.2" width="2" height="425.7" fill="#4a4a4a"/>
<rect x="591" y="264.2" width="2" height="425.7" fill="#4a4a4a"/>
<rect x="631" y="264.2" width="2" height="425.7" fill="#4a4a4a"/>
<rect x="760" y="264.2" width="2" height="425.7" fill="#4a4a4a"/>
<rect x="889" y="264.2" width="2" height="425.7" fill="#4a4a4a"/>
<rect x="964" y="264.2" width="2" height="425.7" fill="#4a4a4a"/>
<rect x="1018" y="264.2" width="2" height="425.7" fill="#4a4a4a"/>
<rect x="1057" y="264.2" width="2" height="425.7" fill="#4a4a4a"/>
<rect x="1093" y="264.2" width="2" height="425.7" fill="#4a4a4a"/>
<rect x="1120" y="264.2" width="2" height="425.7" fill="#4a4a4a"/>
<rect x="1146" y="264.2" width="2" height="425.7" fill="#4a4a4a"/>
<rect x="1166.5" y="264.2" width="2" height="425.7" fill="#4a4a4a"/>
<rect x="1186.5" y="264.2" width="2" height="425.7" fill="#4a4a4a"/>
<rect x="1315" y="264.2" width="2" height="425.7" fill="#4a4a4a"/>
<rect x="1391" y="264.2" width="2" height="425.7" fill="#4a4a4a"/>
<rect x="1444" y="264.2" width="2" height="425.7" fill="#4a4a4a"/>
<rect x="1484" y="264.2" width="2" height="425.7" fill="#4a4a4a"/>
<rect x="1519" y="264.2" width="2" height="425.7" fill="#4a4a4a"/>
<rect x="1546" y="264.2" width="2" height="425.7" fill="#4a4a4a"/>
<rect x="1573" y="264.2" width="2" height="425.7" fill="#4a4a4a"/>
<rect x="1593" y="264.2" width="2" height="425.7" fill="#4a4a4a"/>
<rect x="1613" y="264.2" width="2" height="425.7" fill="#4a4a4a"/>
<rect x="1739" y="264.2" width="2" height="425.7" fill="#4a4a4a"/>
<text x="417.86" y="280" font-size="28.99" fill="#adadad" textLength="41.93" lengthAdjust="spacingAndGlyphs">+30</text>
<text x="1746.76" y="280" font-size="28.99" fill="#adadad" textLength="41.93" lengthAdjust="spacingAndGlyphs">+30</text>
<text x="417.86" y="346" font-size="28.99" fill="#adadad" textLength="41.93" lengthAdjust="spacingAndGlyphs">+20</text>
<text x="1746.76" y="346" font-size="28.99" fill="#adadad" textLength="41.93" lengthAdjust="spacingAndGlyphs">+20</text>
<text x="419.93" y="415" font-size="28.99" fill="#adadad" textLength="39.83" lengthAdjust="spacingAndGlyphs">+10</text>
<text x="1746.83" y="415" font-size="28.99" fill="#adadad" textLength="39.83" lengthAdjust="spacingAndGlyphs">+10</text>
<text x="446.12" y="486.7" font-size="28.99" fill="#adadad" textLength="13.67" lengthAdjust="spacingAndGlyphs">0</text>
<text x="1747.02" y="486.7" font-size="28.99" fill="#adadad" textLength="13.67" lengthAdjust="spacingAndGlyphs">0</text>
<text x="426.05" y="556" font-size="28.99" fill="#adadad" textLength="33.67" lengthAdjust="spacingAndGlyphs">-10</text>
<text x="1746.95" y="556" font-size="28.99" fill="#adadad" textLength="33.67" lengthAdjust="spacingAndGlyphs">-10</text>
<text x="423.99" y="627" font-size="28.99" fill="#adadad" textLength="35.79" lengthAdjust="spacingAndGlyphs">-20</text>
<text x="1746.89" y="627" font-size="28.99" fill="#adadad" textLength="35.79" lengthAdjust="spacingAndGlyphs">-20</text>
<text x="423.99" y="696" font-size="28.99" fill="#adadad" textLength="35.79" lengthAdjust="spacingAndGlyphs">-30</text>
<text x="1746.89" y="696" font-size="28.99" fill="#adadad" textLength="35.79" lengthAdjust="spacingAndGlyphs">-30</text>
<text x="444.77" y="724.5" font-size="28.99" fill="#adadad" textLength="57.45" lengthAdjust="spacingAndGlyphs">20Hz</text>
<text x="723.13" y="724.5" font-size="28.99" fill="#adadad" textLength="72.14" lengthAdjust="spacingAndGlyphs">100Hz</text>
<text x="1146.09" y="724.5" font-size="28.99" fill="#adadad" textLength="65.22" lengthAdjust="spacingAndGlyphs">1 kHz</text>
<text x="1572.14" y="724.5" font-size="28.99" fill="#adadad" textLength="77.16" lengthAdjust="spacingAndGlyphs">10 kHz</text>
<text x="1695.77" y="724.5" font-size="28.99" fill="#adadad" textLength="76.52" lengthAdjust="spacingAndGlyphs">20 kHz</text>
<path d="M806,689.5 C806.25,689.22 805.07,690.73 807.5,687.8 C809.93,684.87 815.28,678.62 820.6,671.9 C825.92,665.18 832.52,655.63 839.4,647.5 C846.28,639.37 853.78,631.38 861.9,623.1 C870.02,614.82 880.28,605.3 888.1,597.8 C895.92,590.3 901.6,584.03 908.8,578.1 C916,572.17 923.8,566.88 931.3,562.2 C938.8,557.52 945.68,554.07 953.8,550 C961.92,545.93 971.25,541.08 980,537.8 C988.75,534.52 998.8,532.02 1006.3,530.3 C1013.8,528.58 1017.2,528.58 1025,527.5 C1032.8,526.42 1043.72,524.73 1053.1,523.8 C1062.48,522.87 1070.15,522.37 1081.3,521.9 C1092.45,521.43 1107.5,521.23 1120,521 C1132.5,520.77 1144.63,520.75 1156.3,520.5 C1167.97,520.25 1179.07,519.67 1190,519.5 C1200.93,519.33 1211.9,519.22 1221.9,519.5 C1231.9,519.78 1234.55,520.83 1250,521.2 C1265.45,521.57 1299.67,521.32 1314.6,521.7 C1329.53,522.08 1330.92,521.87 1339.6,523.5 C1348.28,525.13 1359.42,529.42 1366.7,531.5 C1373.98,533.58 1377.05,533.5 1383.3,536 C1389.55,538.5 1399.42,544.42 1404.2,546.5 C1408.98,548.58 1409.37,548.42 1412,548.5 C1414.63,548.58 1414.37,549.92 1420,547 C1425.63,544.08 1438.37,535.22 1445.8,531 C1453.23,526.78 1458,524.37 1464.6,521.7 C1471.2,519.03 1476.72,517.2 1485.4,515 C1494.08,512.8 1505.93,510.68 1516.7,508.5 C1527.47,506.32 1538.2,503.87 1550,501.9 C1561.8,499.93 1577.08,497.98 1587.5,496.7 C1597.92,495.42 1603.47,494.9 1612.5,494.2 C1621.53,493.5 1622.62,492.78 1641.7,492.5 C1660.78,492.22 1710.33,492.92 1727,492.5 C1743.67,492.08 1739.25,490.42 1741.7,490" fill="none" stroke="#0000c8" stroke-width="4.2" stroke-linejoin="round"/>
<rect x="1867" y="265" width="423.5" height="424" fill="#000"/>
<rect x="1866" y="264" width="2" height="426" fill="#4a4a4a"/>
<rect x="1866" y="264" width="425.5" height="2" fill="#4a4a4a"/>
<rect x="1918.94" y="264" width="2" height="426" fill="#4a4a4a"/>
<rect x="1866" y="317" width="425.5" height="2" fill="#4a4a4a"/>
<rect x="1971.88" y="264" width="2" height="426" fill="#4a4a4a"/>
<rect x="1866" y="370" width="425.5" height="2" fill="#4a4a4a"/>
<rect x="2024.81" y="264" width="2" height="426" fill="#4a4a4a"/>
<rect x="1866" y="423" width="425.5" height="2" fill="#4a4a4a"/>
<rect x="2077.75" y="264" width="2" height="426" fill="#4a4a4a"/>
<rect x="1866" y="476" width="425.5" height="2" fill="#4a4a4a"/>
<rect x="2130.69" y="264" width="2" height="426" fill="#4a4a4a"/>
<rect x="1866" y="529" width="425.5" height="2" fill="#4a4a4a"/>
<rect x="2183.62" y="264" width="2" height="426" fill="#4a4a4a"/>
<rect x="1866" y="582" width="425.5" height="2" fill="#4a4a4a"/>
<rect x="2236.56" y="264" width="2" height="426" fill="#4a4a4a"/>
<rect x="1866" y="635" width="425.5" height="2" fill="#4a4a4a"/>
<rect x="2289.5" y="264" width="2" height="426" fill="#4a4a4a"/>
<rect x="1866" y="688" width="425.5" height="2" fill="#4a4a4a"/>
<line x1="1867" y1="689" x2="2290.5" y2="265" stroke="#5a5a5a" stroke-width="1.3"/>
<path d="M1867,689 L2163.6,394.5 L2228,394.5 L2228,392 L2291,392" fill="none" stroke="#0000c8" stroke-width="4.2" stroke-linejoin="round"/>
<text x="1820.52" y="280" font-size="28.99" fill="#adadad" textLength="39.95" lengthAdjust="spacingAndGlyphs">+16</text>
<text x="2297.82" y="280" font-size="28.99" fill="#adadad" textLength="39.95" lengthAdjust="spacingAndGlyphs">+16</text>
<text x="1832.47" y="383.8" font-size="28.99" fill="#adadad" textLength="28.02" lengthAdjust="spacingAndGlyphs">+8</text>
<text x="2297.77" y="383.8" font-size="28.99" fill="#adadad" textLength="28.02" lengthAdjust="spacingAndGlyphs">+8</text>
<text x="1846.72" y="488" font-size="28.99" fill="#adadad" textLength="13.67" lengthAdjust="spacingAndGlyphs">0</text>
<text x="2298.02" y="488" font-size="28.99" fill="#adadad" textLength="13.67" lengthAdjust="spacingAndGlyphs">0</text>
<text x="1838.59" y="593" font-size="28.99" fill="#adadad" textLength="21.87" lengthAdjust="spacingAndGlyphs">-8</text>
<text x="2297.89" y="593" font-size="28.99" fill="#adadad" textLength="21.87" lengthAdjust="spacingAndGlyphs">-8</text>
<text x="1826.65" y="695" font-size="28.99" fill="#adadad" textLength="33.8" lengthAdjust="spacingAndGlyphs">-16</text>
<text x="2297.95" y="695" font-size="28.99" fill="#adadad" textLength="33.8" lengthAdjust="spacingAndGlyphs">-16</text>
<text x="1847.65" y="724.5" font-size="28.99" fill="#adadad" textLength="33.8" lengthAdjust="spacingAndGlyphs">-16</text>
<text x="1962.89" y="724.5" font-size="28.99" fill="#adadad" textLength="21.87" lengthAdjust="spacingAndGlyphs">-8</text>
<text x="2073.02" y="724.5" font-size="28.99" fill="#adadad" textLength="13.67" lengthAdjust="spacingAndGlyphs">0</text>
<text x="2170.27" y="724.5" font-size="28.99" fill="#adadad" textLength="28.02" lengthAdjust="spacingAndGlyphs">+8</text>
<text x="2268.62" y="724.5" font-size="28.99" fill="#adadad" textLength="39.95" lengthAdjust="spacingAndGlyphs">+16</text>
<rect x="396" y="753" width="15" height="1" fill="#9a9a9a"/>
<rect x="520.5" y="753" width="1067.5" height="1" fill="#9a9a9a"/>
<rect x="396" y="829" width="1192" height="1" fill="#9a9a9a"/>
<rect x="396" y="753" width="1" height="77" fill="#9a9a9a"/>
<rect x="1587" y="753" width="1" height="77" fill="#9a9a9a"/>
<rect x="396.8" y="753.8" width="14.2" height="2.7" fill="#eeeeee"/>
<rect x="520.5" y="753.8" width="1066.7" height="2.7" fill="#eeeeee"/>
<rect x="396.8" y="826.5" width="1190.4" height="2.7" fill="#eeeeee"/>
<rect x="396.8" y="753.8" width="2.7" height="75.4" fill="#eeeeee"/>
<rect x="1584.5" y="753.8" width="2.7" height="75.4" fill="#eeeeee"/>
<rect x="399.5" y="756.5" width="11.5" height="2" fill="#5a5a5a"/>
<rect x="520.5" y="756.5" width="1064" height="2" fill="#5a5a5a"/>
<rect x="399.5" y="824.5" width="1185" height="2" fill="#5a5a5a"/>
<rect x="399.5" y="756.5" width="2" height="70" fill="#5a5a5a"/>
<rect x="1582.5" y="756.5" width="2" height="70" fill="#5a5a5a"/>
<text x="415.18" y="763.5" font-size="28.99" fill="#adadad" textLength="101.11" lengthAdjust="spacingAndGlyphs">EQ Filters</text>
<rect x="1302" y="772" width="126" height="46" rx="3" fill="url(#gbtn)"/>
<rect x="1306" y="774" width="118" height="2" fill="#4a4a4a" opacity="0.9"/>
<text x="1325.63" y="801.6" font-size="28.99" fill="#adadad" textLength="79.09" lengthAdjust="spacingAndGlyphs">EQ Flat</text>
<text x="1448.13" y="801.6" font-size="28.99" fill="#adadad" textLength="76.67" lengthAdjust="spacingAndGlyphs">Bypass</text>
<rect x="1542" y="779" width="28" height="29" fill="#ffffff"/>
<rect x="1542" y="779" width="28" height="2" fill="#9a9a9a"/>
<rect x="1542" y="779" width="2" height="29" fill="#9a9a9a"/>
<rect x="1544" y="781" width="24" height="2" fill="#707070"/>
<rect x="1544" y="781" width="2" height="25" fill="#707070"/>
<rect x="1544" y="804" width="24" height="2" fill="#d8d8d8"/>
<rect x="1566" y="781" width="2" height="25" fill="#d8d8d8"/>
<rect x="1604" y="753.5" width="15" height="1" fill="#9a9a9a"/>
<rect x="1810.6" y="753.5" width="364.4" height="1" fill="#9a9a9a"/>
<rect x="1604" y="829" width="571" height="1" fill="#9a9a9a"/>
<rect x="1604" y="753.5" width="1" height="76.5" fill="#9a9a9a"/>
<rect x="2174" y="753.5" width="1" height="76.5" fill="#9a9a9a"/>
<rect x="1604.8" y="754.3" width="14.2" height="2.7" fill="#eeeeee"/>
<rect x="1810.6" y="754.3" width="363.6" height="2.7" fill="#eeeeee"/>
<rect x="1604.8" y="826.5" width="569.4" height="2.7" fill="#eeeeee"/>
<rect x="1604.8" y="754.3" width="2.7" height="74.9" fill="#eeeeee"/>
<rect x="2171.5" y="754.3" width="2.7" height="74.9" fill="#eeeeee"/>
<rect x="1607.5" y="757" width="11.5" height="2" fill="#5a5a5a"/>
<rect x="1810.6" y="757" width="360.9" height="2" fill="#5a5a5a"/>
<rect x="1607.5" y="824.5" width="564" height="2" fill="#5a5a5a"/>
<rect x="1607.5" y="757" width="2" height="69.5" fill="#5a5a5a"/>
<rect x="2169.5" y="757" width="2" height="69.5" fill="#5a5a5a"/>
<text x="1623.16" y="764" font-size="28.99" fill="#adadad" textLength="182.81" lengthAdjust="spacingAndGlyphs">RMS Compressor</text>
<text x="2033.62" y="800.9" font-size="28.99" fill="#adadad" textLength="76.88" lengthAdjust="spacingAndGlyphs">Bypass</text>
<rect x="2128.3" y="780" width="28.7" height="27.6" fill="#ffffff"/>
<rect x="2128.3" y="780" width="28.7" height="2" fill="#9a9a9a"/>
<rect x="2128.3" y="780" width="2" height="27.6" fill="#9a9a9a"/>
<rect x="2130.3" y="782" width="24.7" height="2" fill="#707070"/>
<rect x="2130.3" y="782" width="2" height="23.6" fill="#707070"/>
<rect x="2130.3" y="803.6" width="24.7" height="2" fill="#d8d8d8"/>
<rect x="2153" y="782" width="2" height="23.6" fill="#d8d8d8"/>
<rect x="2190.5" y="754.7" width="14.5" height="1" fill="#9a9a9a"/>
<rect x="2258" y="754.7" width="94" height="1" fill="#9a9a9a"/>
<rect x="2190.5" y="829" width="161.5" height="1" fill="#9a9a9a"/>
<rect x="2190.5" y="754.7" width="1" height="75.3" fill="#9a9a9a"/>
<rect x="2351" y="754.7" width="1" height="75.3" fill="#9a9a9a"/>
<rect x="2191.3" y="755.5" width="13.7" height="2.7" fill="#eeeeee"/>
<rect x="2258" y="755.5" width="93.2" height="2.7" fill="#eeeeee"/>
<rect x="2191.3" y="826.5" width="159.9" height="2.7" fill="#eeeeee"/>
<rect x="2191.3" y="755.5" width="2.7" height="73.7" fill="#eeeeee"/>
<rect x="2348.5" y="755.5" width="2.7" height="73.7" fill="#eeeeee"/>
<rect x="2194" y="758.2" width="11" height="2" fill="#5a5a5a"/>
<rect x="2258" y="758.2" width="90.5" height="2" fill="#5a5a5a"/>
<rect x="2194" y="824.5" width="154.5" height="2" fill="#5a5a5a"/>
<rect x="2194" y="758.2" width="2" height="68.3" fill="#5a5a5a"/>
<rect x="2346.5" y="758.2" width="2" height="68.3" fill="#5a5a5a"/>
<text x="2209.1" y="764" font-size="28.99" fill="#adadad" textLength="44.83" lengthAdjust="spacingAndGlyphs">DLF</text>
<text x="2210.82" y="797.5" font-size="28.99" fill="#da740c" textLength="76.99" lengthAdjust="spacingAndGlyphs">Bypass</text>
<rect x="2305.5" y="775.6" width="28.5" height="27" fill="#ffffff"/>
<rect x="2305.5" y="775.6" width="28.5" height="2" fill="#9a9a9a"/>
<rect x="2305.5" y="775.6" width="2" height="27" fill="#9a9a9a"/>
<rect x="2307.5" y="777.6" width="24.5" height="2" fill="#707070"/>
<rect x="2307.5" y="777.6" width="2" height="23" fill="#707070"/>
<rect x="2307.5" y="798.6" width="24.5" height="2" fill="#d8d8d8"/>
<rect x="2330" y="777.6" width="2" height="23" fill="#d8d8d8"/>
<path d="M2314.05,789.64 L2318.04,793.96 L2325.45,785.32" fill="none" stroke="#000" stroke-width="3.6" stroke-linecap="square"/>
<rect x="396" y="846.5" width="15" height="1" fill="#9a9a9a"/>
<rect x="520.5" y="846.5" width="1067.5" height="1" fill="#9a9a9a"/>
<rect x="396" y="1384.5" width="1192" height="1" fill="#9a9a9a"/>
<rect x="396" y="846.5" width="1" height="539" fill="#9a9a9a"/>
<rect x="1587" y="846.5" width="1" height="539" fill="#9a9a9a"/>
<rect x="396.8" y="847.3" width="14.2" height="2.7" fill="#eeeeee"/>
<rect x="520.5" y="847.3" width="1066.7" height="2.7" fill="#eeeeee"/>
<rect x="396.8" y="1382" width="1190.4" height="2.7" fill="#eeeeee"/>
<rect x="396.8" y="847.3" width="2.7" height="537.4" fill="#eeeeee"/>
<rect x="1584.5" y="847.3" width="2.7" height="537.4" fill="#eeeeee"/>
<rect x="399.5" y="850" width="11.5" height="2" fill="#5a5a5a"/>
<rect x="520.5" y="850" width="1064" height="2" fill="#5a5a5a"/>
<rect x="399.5" y="1380" width="1185" height="2" fill="#5a5a5a"/>
<rect x="399.5" y="850" width="2" height="532" fill="#5a5a5a"/>
<rect x="1582.5" y="850" width="2" height="532" fill="#5a5a5a"/>
<text x="415.18" y="857" font-size="28.99" fill="#adadad" textLength="101.11" lengthAdjust="spacingAndGlyphs">EQ Filters</text>
<rect x="413.8" y="869.6" width="89" height="46.4" rx="3" fill="url(#gbtn)"/>
<rect x="417.8" y="871.6" width="81" height="2" fill="#4a4a4a" opacity="0.9"/>
<text x="415.03" y="899" font-size="28.99" fill="#adadad" textLength="88.84" lengthAdjust="spacingAndGlyphs">Peaking</text>
<rect x="412.8" y="920.6" width="91.8" height="43.1" fill="#c3c3c3"/>
<rect x="412.8" y="920.6" width="91.8" height="2" fill="#a0a0a0"/>
<rect x="412.8" y="920.6" width="2" height="43.1" fill="#a0a0a0"/>
<rect x="414.8" y="922.6" width="87.8" height="2" fill="#6c6c6c"/>
<rect x="414.8" y="922.6" width="2" height="39.1" fill="#6c6c6c"/>
<rect x="412.8" y="961.7" width="91.8" height="2" fill="#f8f8f8"/>
<rect x="502.6" y="920.6" width="2" height="43.1" fill="#f8f8f8"/>
<rect x="414.8" y="959.7" width="87.8" height="2" fill="#d8d8d8"/>
<rect x="500.6" y="922.6" width="2" height="39.1" fill="#d8d8d8"/>
<text x="452.22" y="951.7" font-size="28.26" fill="#1a1a1a" textLength="13.67" lengthAdjust="spacingAndGlyphs">0</text>
<rect x="420.8" y="993.7" width="14" height="3" fill="#050505"/>
<rect x="484.5" y="993.7" width="13.8" height="3" fill="#050505"/>
<rect x="420.8" y="1023.4" width="14" height="3" fill="#050505"/>
<rect x="484.5" y="1023.4" width="13.8" height="3" fill="#050505"/>
<rect x="420.8" y="1053.1" width="14" height="3" fill="#050505"/>
<rect x="484.5" y="1053.1" width="13.8" height="3" fill="#050505"/>
<rect x="420.8" y="1082.8" width="14" height="3" fill="#050505"/>
<rect x="484.5" y="1082.8" width="13.8" height="3" fill="#050505"/>
<rect x="420.8" y="1112.5" width="14" height="3" fill="#050505"/>
<rect x="484.5" y="1112.5" width="13.8" height="3" fill="#050505"/>
<rect x="420.8" y="1142.2" width="14" height="3" fill="#050505"/>
<rect x="484.5" y="1142.2" width="13.8" height="3" fill="#050505"/>
<rect x="420.8" y="1171.9" width="14" height="3" fill="#050505"/>
<rect x="484.5" y="1171.9" width="13.8" height="3" fill="#050505"/>
<rect x="458.3" y="983.8" width="2" height="194.9" fill="#a0a0a0"/>
<rect x="443.2" y="1062.5" width="36.8" height="38.2" fill="#727272"/>
<rect x="445.2" y="1064" width="32.3" height="34.2" fill="#f6f6f6"/>
<rect x="447.7" y="1066.5" width="27.3" height="13.6" fill="url(#gthumb)"/>
<rect x="447.7" y="1083.1" width="27.3" height="12.6" fill="#ffffff"/>
<rect x="445.2" y="1080.1" width="32.3" height="3" fill="#505050"/>
<rect x="413.8" y="1205.4" width="90.3" height="42.4" fill="#c3c3c3"/>
<rect x="413.8" y="1205.4" width="90.3" height="2" fill="#a0a0a0"/>
<rect x="413.8" y="1205.4" width="2" height="42.4" fill="#a0a0a0"/>
<rect x="415.8" y="1207.4" width="86.3" height="2" fill="#6c6c6c"/>
<rect x="415.8" y="1207.4" width="2" height="38.4" fill="#6c6c6c"/>
<rect x="413.8" y="1245.8" width="90.3" height="2" fill="#f8f8f8"/>
<rect x="502.1" y="1205.4" width="2" height="42.4" fill="#f8f8f8"/>
<rect x="415.8" y="1243.8" width="86.3" height="2" fill="#d8d8d8"/>
<rect x="500.1" y="1207.4" width="2" height="38.4" fill="#d8d8d8"/>
<text x="437.32" y="1236" font-size="28.26" fill="#1a1a1a" textLength="41.77" lengthAdjust="spacingAndGlyphs">125</text>
<rect x="413.8" y="1259" width="90.3" height="54.8" fill="#c3c3c3"/>
<rect x="413.8" y="1259" width="90.3" height="2" fill="#a0a0a0"/>
<rect x="413.8" y="1259" width="2" height="54.8" fill="#a0a0a0"/>
<rect x="415.8" y="1261" width="86.3" height="2" fill="#6c6c6c"/>
<rect x="415.8" y="1261" width="2" height="50.8" fill="#6c6c6c"/>
<rect x="413.8" y="1311.8" width="90.3" height="2" fill="#f8f8f8"/>
<rect x="502.1" y="1259" width="2" height="54.8" fill="#f8f8f8"/>
<rect x="415.8" y="1309.8" width="86.3" height="2" fill="#d8d8d8"/>
<rect x="500.1" y="1261" width="2" height="50.8" fill="#d8d8d8"/>
<rect x="415.8" y="1297" width="86.3" height="16.8" fill="#f0f0f0"/>
<rect x="415.8" y="1311.5" width="86.3" height="2.3" fill="#9a9a9a"/>
<rect x="454.8" y="1297" width="3.5" height="16.8" fill="#a0a0a0"/>
<rect x="499.8" y="1297" width="2.3" height="16.8" fill="#9a9a9a"/>
<polygon points="433.4,1304.8 438.2,1301.8 438.2,1307.8" fill="#000"/>
<polygon points="480.3,1301.8 480.3,1307.8 485.1,1304.8" fill="#000"/>
<text x="451.9" y="1289.5" font-size="28.26" fill="#1a1a1a" textLength="14.42" lengthAdjust="spacingAndGlyphs">2</text>
<rect x="413.8" y="1332" width="88.3" height="44.4" rx="3" fill="url(#gbtn)"/>
<rect x="417.8" y="1334" width="80.3" height="2" fill="#4a4a4a" opacity="0.9"/>
<text x="437.69" y="1360.4" font-size="28.99" fill="#adadad" textLength="41.14" lengthAdjust="spacingAndGlyphs">Byp</text>
<rect x="520.47" y="869.6" width="89" height="46.4" rx="3" fill="url(#gbtn)"/>
<rect x="524.47" y="871.6" width="81" height="2" fill="#4a4a4a" opacity="0.9"/>
<text x="521.7" y="899" font-size="28.99" fill="#adadad" textLength="88.84" lengthAdjust="spacingAndGlyphs">Peaking</text>
<rect x="519.47" y="920.6" width="91.8" height="43.1" fill="#c3c3c3"/>
<rect x="519.47" y="920.6" width="91.8" height="2" fill="#a0a0a0"/>
<rect x="519.47" y="920.6" width="2" height="43.1" fill="#a0a0a0"/>
<rect x="521.47" y="922.6" width="87.8" height="2" fill="#6c6c6c"/>
<rect x="521.47" y="922.6" width="2" height="39.1" fill="#6c6c6c"/>
<rect x="519.47" y="961.7" width="91.8" height="2" fill="#f8f8f8"/>
<rect x="609.27" y="920.6" width="2" height="43.1" fill="#f8f8f8"/>
<rect x="521.47" y="959.7" width="87.8" height="2" fill="#d8d8d8"/>
<rect x="607.27" y="922.6" width="2" height="39.1" fill="#d8d8d8"/>
<text x="558.89" y="951.7" font-size="28.26" fill="#1a1a1a" textLength="13.67" lengthAdjust="spacingAndGlyphs">0</text>
<rect x="527.47" y="993.7" width="14" height="3" fill="#050505"/>
<rect x="591.17" y="993.7" width="13.8" height="3" fill="#050505"/>
<rect x="527.47" y="1023.4" width="14" height="3" fill="#050505"/>
<rect x="591.17" y="1023.4" width="13.8" height="3" fill="#050505"/>
<rect x="527.47" y="1053.1" width="14" height="3" fill="#050505"/>
<rect x="591.17" y="1053.1" width="13.8" height="3" fill="#050505"/>
<rect x="527.47" y="1082.8" width="14" height="3" fill="#050505"/>
<rect x="591.17" y="1082.8" width="13.8" height="3" fill="#050505"/>
<rect x="527.47" y="1112.5" width="14" height="3" fill="#050505"/>
<rect x="591.17" y="1112.5" width="13.8" height="3" fill="#050505"/>
<rect x="527.47" y="1142.2" width="14" height="3" fill="#050505"/>
<rect x="591.17" y="1142.2" width="13.8" height="3" fill="#050505"/>
<rect x="527.47" y="1171.9" width="14" height="3" fill="#050505"/>
<rect x="591.17" y="1171.9" width="13.8" height="3" fill="#050505"/>
<rect x="564.97" y="983.8" width="2" height="194.9" fill="#a0a0a0"/>
<rect x="549.87" y="1062.5" width="36.8" height="38.2" fill="#727272"/>
<rect x="551.87" y="1064" width="32.3" height="34.2" fill="#f6f6f6"/>
<rect x="554.37" y="1066.5" width="27.3" height="13.6" fill="url(#gthumb)"/>
<rect x="554.37" y="1083.1" width="27.3" height="12.6" fill="#ffffff"/>
<rect x="551.87" y="1080.1" width="32.3" height="3" fill="#505050"/>
<rect x="520.47" y="1205.4" width="90.3" height="42.4" fill="#c3c3c3"/>
<rect x="520.47" y="1205.4" width="90.3" height="2" fill="#a0a0a0"/>
<rect x="520.47" y="1205.4" width="2" height="42.4" fill="#a0a0a0"/>
<rect x="522.47" y="1207.4" width="86.3" height="2" fill="#6c6c6c"/>
<rect x="522.47" y="1207.4" width="2" height="38.4" fill="#6c6c6c"/>
<rect x="520.47" y="1245.8" width="90.3" height="2" fill="#f8f8f8"/>
<rect x="608.77" y="1205.4" width="2" height="42.4" fill="#f8f8f8"/>
<rect x="522.47" y="1243.8" width="86.3" height="2" fill="#d8d8d8"/>
<rect x="606.77" y="1207.4" width="2" height="38.4" fill="#d8d8d8"/>
<text x="544.61" y="1236" font-size="28.26" fill="#1a1a1a" textLength="42.03" lengthAdjust="spacingAndGlyphs">250</text>
<rect x="520.47" y="1259" width="90.3" height="54.8" fill="#c3c3c3"/>
<rect x="520.47" y="1259" width="90.3" height="2" fill="#a0a0a0"/>
<rect x="520.47" y="1259" width="2" height="54.8" fill="#a0a0a0"/>
<rect x="522.47" y="1261" width="86.3" height="2" fill="#6c6c6c"/>
<rect x="522.47" y="1261" width="2" height="50.8" fill="#6c6c6c"/>
<rect x="520.47" y="1311.8" width="90.3" height="2" fill="#f8f8f8"/>
<rect x="608.77" y="1259" width="2" height="54.8" fill="#f8f8f8"/>
<rect x="522.47" y="1309.8" width="86.3" height="2" fill="#d8d8d8"/>
<rect x="606.77" y="1261" width="2" height="50.8" fill="#d8d8d8"/>
<rect x="522.47" y="1297" width="86.3" height="16.8" fill="#f0f0f0"/>
<rect x="522.47" y="1311.5" width="86.3" height="2.3" fill="#9a9a9a"/>
<rect x="561.47" y="1297" width="3.5" height="16.8" fill="#a0a0a0"/>
<rect x="606.47" y="1297" width="2.3" height="16.8" fill="#9a9a9a"/>
<polygon points="540.07,1304.8 544.87,1301.8 544.87,1307.8" fill="#000"/>
<polygon points="586.97,1301.8 586.97,1307.8 591.77,1304.8" fill="#000"/>
<text x="558.57" y="1289.5" font-size="28.26" fill="#1a1a1a" textLength="14.42" lengthAdjust="spacingAndGlyphs">2</text>
<rect x="520.47" y="1332" width="88.3" height="44.4" rx="3" fill="url(#gbtn)"/>
<rect x="524.47" y="1334" width="80.3" height="2" fill="#4a4a4a" opacity="0.9"/>
<text x="544.36" y="1360.4" font-size="28.99" fill="#adadad" textLength="41.14" lengthAdjust="spacingAndGlyphs">Byp</text>
<rect x="627.14" y="869.6" width="89" height="46.4" rx="3" fill="url(#gbtn)"/>
<rect x="631.14" y="871.6" width="81" height="2" fill="#4a4a4a" opacity="0.9"/>
<text x="628.37" y="899" font-size="28.99" fill="#adadad" textLength="88.84" lengthAdjust="spacingAndGlyphs">Peaking</text>
<rect x="626.14" y="920.6" width="91.8" height="43.1" fill="#c3c3c3"/>
<rect x="626.14" y="920.6" width="91.8" height="2" fill="#a0a0a0"/>
<rect x="626.14" y="920.6" width="2" height="43.1" fill="#a0a0a0"/>
<rect x="628.14" y="922.6" width="87.8" height="2" fill="#6c6c6c"/>
<rect x="628.14" y="922.6" width="2" height="39.1" fill="#6c6c6c"/>
<rect x="626.14" y="961.7" width="91.8" height="2" fill="#f8f8f8"/>
<rect x="715.94" y="920.6" width="2" height="43.1" fill="#f8f8f8"/>
<rect x="628.14" y="959.7" width="87.8" height="2" fill="#d8d8d8"/>
<rect x="713.94" y="922.6" width="2" height="39.1" fill="#d8d8d8"/>
<text x="665.56" y="951.7" font-size="28.26" fill="#1a1a1a" textLength="13.67" lengthAdjust="spacingAndGlyphs">0</text>
<rect x="634.14" y="993.7" width="14" height="3" fill="#050505"/>
<rect x="697.84" y="993.7" width="13.8" height="3" fill="#050505"/>
<rect x="634.14" y="1023.4" width="14" height="3" fill="#050505"/>
<rect x="697.84" y="1023.4" width="13.8" height="3" fill="#050505"/>
<rect x="634.14" y="1053.1" width="14" height="3" fill="#050505"/>
<rect x="697.84" y="1053.1" width="13.8" height="3" fill="#050505"/>
<rect x="634.14" y="1082.8" width="14" height="3" fill="#050505"/>
<rect x="697.84" y="1082.8" width="13.8" height="3" fill="#050505"/>
<rect x="634.14" y="1112.5" width="14" height="3" fill="#050505"/>
<rect x="697.84" y="1112.5" width="13.8" height="3" fill="#050505"/>
<rect x="634.14" y="1142.2" width="14" height="3" fill="#050505"/>
<rect x="697.84" y="1142.2" width="13.8" height="3" fill="#050505"/>
<rect x="634.14" y="1171.9" width="14" height="3" fill="#050505"/>
<rect x="697.84" y="1171.9" width="13.8" height="3" fill="#050505"/>
<rect x="671.64" y="983.8" width="2" height="194.9" fill="#a0a0a0"/>
<rect x="656.54" y="1062.5" width="36.8" height="38.2" fill="#727272"/>
<rect x="658.54" y="1064" width="32.3" height="34.2" fill="#f6f6f6"/>
<rect x="661.04" y="1066.5" width="27.3" height="13.6" fill="url(#gthumb)"/>
<rect x="661.04" y="1083.1" width="27.3" height="12.6" fill="#ffffff"/>
<rect x="658.54" y="1080.1" width="32.3" height="3" fill="#505050"/>
<rect x="627.14" y="1205.4" width="90.3" height="42.4" fill="#c3c3c3"/>
<rect x="627.14" y="1205.4" width="90.3" height="2" fill="#a0a0a0"/>
<rect x="627.14" y="1205.4" width="2" height="42.4" fill="#a0a0a0"/>
<rect x="629.14" y="1207.4" width="86.3" height="2" fill="#6c6c6c"/>
<rect x="629.14" y="1207.4" width="2" height="38.4" fill="#6c6c6c"/>
<rect x="627.14" y="1245.8" width="90.3" height="2" fill="#f8f8f8"/>
<rect x="715.44" y="1205.4" width="2" height="42.4" fill="#f8f8f8"/>
<rect x="629.14" y="1243.8" width="86.3" height="2" fill="#d8d8d8"/>
<rect x="713.44" y="1207.4" width="2" height="38.4" fill="#d8d8d8"/>
<text x="644.74" y="1236" font-size="28.26" fill="#1a1a1a" textLength="53.43" lengthAdjust="spacingAndGlyphs">1310</text>
<rect x="627.14" y="1259" width="90.3" height="54.8" fill="#c3c3c3"/>
<rect x="627.14" y="1259" width="90.3" height="2" fill="#a0a0a0"/>
<rect x="627.14" y="1259" width="2" height="54.8" fill="#a0a0a0"/>
<rect x="629.14" y="1261" width="86.3" height="2" fill="#6c6c6c"/>
<rect x="629.14" y="1261" width="2" height="50.8" fill="#6c6c6c"/>
<rect x="627.14" y="1311.8" width="90.3" height="2" fill="#f8f8f8"/>
<rect x="715.44" y="1259" width="2" height="54.8" fill="#f8f8f8"/>
<rect x="629.14" y="1309.8" width="86.3" height="2" fill="#d8d8d8"/>
<rect x="713.44" y="1261" width="2" height="50.8" fill="#d8d8d8"/>
<rect x="629.14" y="1297" width="86.3" height="16.8" fill="#f0f0f0"/>
<rect x="629.14" y="1311.5" width="86.3" height="2.3" fill="#9a9a9a"/>
<rect x="668.14" y="1297" width="3.5" height="16.8" fill="#a0a0a0"/>
<rect x="713.14" y="1297" width="2.3" height="16.8" fill="#9a9a9a"/>
<polygon points="646.74,1304.8 651.54,1301.8 651.54,1307.8" fill="#000"/>
<polygon points="693.64,1301.8 693.64,1307.8 698.44,1304.8" fill="#000"/>
<text x="655.33" y="1289.5" font-size="28.26" fill="#1a1a1a" textLength="33.75" lengthAdjust="spacingAndGlyphs">2.4</text>
<rect x="627.14" y="1332" width="88.3" height="44.4" rx="3" fill="url(#gbtn)"/>
<rect x="631.14" y="1334" width="80.3" height="2" fill="#4a4a4a" opacity="0.9"/>
<text x="651.03" y="1360.4" font-size="28.99" fill="#adadad" textLength="41.14" lengthAdjust="spacingAndGlyphs">Byp</text>
<rect x="733.81" y="869.6" width="89" height="46.4" rx="3" fill="url(#gbtn)"/>
<rect x="737.81" y="871.6" width="81" height="2" fill="#4a4a4a" opacity="0.9"/>
<text x="735.04" y="899" font-size="28.99" fill="#adadad" textLength="88.84" lengthAdjust="spacingAndGlyphs">Peaking</text>
<rect x="732.81" y="920.6" width="91.8" height="43.1" fill="#c3c3c3"/>
<rect x="732.81" y="920.6" width="91.8" height="2" fill="#a0a0a0"/>
<rect x="732.81" y="920.6" width="2" height="43.1" fill="#a0a0a0"/>
<rect x="734.81" y="922.6" width="87.8" height="2" fill="#6c6c6c"/>
<rect x="734.81" y="922.6" width="2" height="39.1" fill="#6c6c6c"/>
<rect x="732.81" y="961.7" width="91.8" height="2" fill="#f8f8f8"/>
<rect x="822.61" y="920.6" width="2" height="43.1" fill="#f8f8f8"/>
<rect x="734.81" y="959.7" width="87.8" height="2" fill="#d8d8d8"/>
<rect x="820.61" y="922.6" width="2" height="39.1" fill="#d8d8d8"/>
<text x="772.23" y="951.7" font-size="28.26" fill="#1a1a1a" textLength="13.67" lengthAdjust="spacingAndGlyphs">0</text>
<rect x="740.81" y="993.7" width="14" height="3" fill="#050505"/>
<rect x="804.51" y="993.7" width="13.8" height="3" fill="#050505"/>
<rect x="740.81" y="1023.4" width="14" height="3" fill="#050505"/>
<rect x="804.51" y="1023.4" width="13.8" height="3" fill="#050505"/>
<rect x="740.81" y="1053.1" width="14" height="3" fill="#050505"/>
<rect x="804.51" y="1053.1" width="13.8" height="3" fill="#050505"/>
<rect x="740.81" y="1082.8" width="14" height="3" fill="#050505"/>
<rect x="804.51" y="1082.8" width="13.8" height="3" fill="#050505"/>
<rect x="740.81" y="1112.5" width="14" height="3" fill="#050505"/>
<rect x="804.51" y="1112.5" width="13.8" height="3" fill="#050505"/>
<rect x="740.81" y="1142.2" width="14" height="3" fill="#050505"/>
<rect x="804.51" y="1142.2" width="13.8" height="3" fill="#050505"/>
<rect x="740.81" y="1171.9" width="14" height="3" fill="#050505"/>
<rect x="804.51" y="1171.9" width="13.8" height="3" fill="#050505"/>
<rect x="778.31" y="983.8" width="2" height="194.9" fill="#a0a0a0"/>
<rect x="763.21" y="1062.5" width="36.8" height="38.2" fill="#727272"/>
<rect x="765.21" y="1064" width="32.3" height="34.2" fill="#f6f6f6"/>
<rect x="767.71" y="1066.5" width="27.3" height="13.6" fill="url(#gthumb)"/>
<rect x="767.71" y="1083.1" width="27.3" height="12.6" fill="#ffffff"/>
<rect x="765.21" y="1080.1" width="32.3" height="3" fill="#505050"/>
<rect x="733.81" y="1205.4" width="90.3" height="42.4" fill="#c3c3c3"/>
<rect x="733.81" y="1205.4" width="90.3" height="2" fill="#a0a0a0"/>
<rect x="733.81" y="1205.4" width="2" height="42.4" fill="#a0a0a0"/>
<rect x="735.81" y="1207.4" width="86.3" height="2" fill="#6c6c6c"/>
<rect x="735.81" y="1207.4" width="2" height="38.4" fill="#6c6c6c"/>
<rect x="733.81" y="1245.8" width="90.3" height="2" fill="#f8f8f8"/>
<rect x="822.11" y="1205.4" width="2" height="42.4" fill="#f8f8f8"/>
<rect x="735.81" y="1243.8" width="86.3" height="2" fill="#d8d8d8"/>
<rect x="820.11" y="1207.4" width="2" height="38.4" fill="#d8d8d8"/>
<text x="750.34" y="1236" font-size="28.26" fill="#1a1a1a" textLength="55.54" lengthAdjust="spacingAndGlyphs">1820</text>
<rect x="733.81" y="1259" width="90.3" height="54.8" fill="#c3c3c3"/>
<rect x="733.81" y="1259" width="90.3" height="2" fill="#a0a0a0"/>
<rect x="733.81" y="1259" width="2" height="54.8" fill="#a0a0a0"/>
<rect x="735.81" y="1261" width="86.3" height="2" fill="#6c6c6c"/>
<rect x="735.81" y="1261" width="2" height="50.8" fill="#6c6c6c"/>
<rect x="733.81" y="1311.8" width="90.3" height="2" fill="#f8f8f8"/>
<rect x="822.11" y="1259" width="2" height="54.8" fill="#f8f8f8"/>
<rect x="735.81" y="1309.8" width="86.3" height="2" fill="#d8d8d8"/>
<rect x="820.11" y="1261" width="2" height="50.8" fill="#d8d8d8"/>
<rect x="735.81" y="1297" width="86.3" height="16.8" fill="#f0f0f0"/>
<rect x="735.81" y="1311.5" width="86.3" height="2.3" fill="#9a9a9a"/>
<rect x="774.81" y="1297" width="3.5" height="16.8" fill="#a0a0a0"/>
<rect x="819.81" y="1297" width="2.3" height="16.8" fill="#9a9a9a"/>
<polygon points="753.41,1304.8 758.21,1301.8 758.21,1307.8" fill="#000"/>
<polygon points="800.31,1301.8 800.31,1307.8 805.11,1304.8" fill="#000"/>
<text x="761.98" y="1289.5" font-size="28.26" fill="#1a1a1a" textLength="34.27" lengthAdjust="spacingAndGlyphs">2.2</text>
<rect x="733.81" y="1332" width="88.3" height="44.4" rx="3" fill="url(#gbtn)"/>
<rect x="737.81" y="1334" width="80.3" height="2" fill="#4a4a4a" opacity="0.9"/>
<text x="757.7" y="1360.4" font-size="28.99" fill="#adadad" textLength="41.14" lengthAdjust="spacingAndGlyphs">Byp</text>
<rect x="840.48" y="869.6" width="89" height="46.4" rx="3" fill="url(#gbtn)"/>
<rect x="844.48" y="871.6" width="81" height="2" fill="#4a4a4a" opacity="0.9"/>
<text x="841.71" y="899" font-size="28.99" fill="#adadad" textLength="88.84" lengthAdjust="spacingAndGlyphs">Peaking</text>
<rect x="839.48" y="920.6" width="91.8" height="43.1" fill="#c3c3c3"/>
<rect x="839.48" y="920.6" width="91.8" height="2" fill="#a0a0a0"/>
<rect x="839.48" y="920.6" width="2" height="43.1" fill="#a0a0a0"/>
<rect x="841.48" y="922.6" width="87.8" height="2" fill="#6c6c6c"/>
<rect x="841.48" y="922.6" width="2" height="39.1" fill="#6c6c6c"/>
<rect x="839.48" y="961.7" width="91.8" height="2" fill="#f8f8f8"/>
<rect x="929.28" y="920.6" width="2" height="43.1" fill="#f8f8f8"/>
<rect x="841.48" y="959.7" width="87.8" height="2" fill="#d8d8d8"/>
<rect x="927.28" y="922.6" width="2" height="39.1" fill="#d8d8d8"/>
<text x="864.78" y="951.7" font-size="28.26" fill="#1a1a1a" textLength="41.95" lengthAdjust="spacingAndGlyphs">-0.5</text>
<rect x="847.48" y="993.7" width="14" height="3" fill="#050505"/>
<rect x="911.18" y="993.7" width="13.8" height="3" fill="#050505"/>
<rect x="847.48" y="1023.4" width="14" height="3" fill="#050505"/>
<rect x="911.18" y="1023.4" width="13.8" height="3" fill="#050505"/>
<rect x="847.48" y="1053.1" width="14" height="3" fill="#050505"/>
<rect x="911.18" y="1053.1" width="13.8" height="3" fill="#050505"/>
<rect x="847.48" y="1082.8" width="14" height="3" fill="#050505"/>
<rect x="911.18" y="1082.8" width="13.8" height="3" fill="#050505"/>
<rect x="847.48" y="1112.5" width="14" height="3" fill="#050505"/>
<rect x="911.18" y="1112.5" width="13.8" height="3" fill="#050505"/>
<rect x="847.48" y="1142.2" width="14" height="3" fill="#050505"/>
<rect x="911.18" y="1142.2" width="13.8" height="3" fill="#050505"/>
<rect x="847.48" y="1171.9" width="14" height="3" fill="#050505"/>
<rect x="911.18" y="1171.9" width="13.8" height="3" fill="#050505"/>
<rect x="884.98" y="983.8" width="2" height="194.9" fill="#a0a0a0"/>
<rect x="869.88" y="1068" width="36.8" height="38.2" fill="#727272"/>
<rect x="871.88" y="1069.5" width="32.3" height="34.2" fill="#f6f6f6"/>
<rect x="874.38" y="1072" width="27.3" height="13.6" fill="url(#gthumb)"/>
<rect x="874.38" y="1088.6" width="27.3" height="12.6" fill="#ffffff"/>
<rect x="871.88" y="1085.6" width="32.3" height="3" fill="#505050"/>
<rect x="840.48" y="1205.4" width="90.3" height="42.4" fill="#c3c3c3"/>
<rect x="840.48" y="1205.4" width="90.3" height="2" fill="#a0a0a0"/>
<rect x="840.48" y="1205.4" width="2" height="42.4" fill="#a0a0a0"/>
<rect x="842.48" y="1207.4" width="86.3" height="2" fill="#6c6c6c"/>
<rect x="842.48" y="1207.4" width="2" height="38.4" fill="#6c6c6c"/>
<rect x="840.48" y="1245.8" width="90.3" height="2" fill="#f8f8f8"/>
<rect x="928.78" y="1205.4" width="2" height="42.4" fill="#f8f8f8"/>
<rect x="842.48" y="1243.8" width="86.3" height="2" fill="#d8d8d8"/>
<rect x="926.78" y="1207.4" width="2" height="38.4" fill="#d8d8d8"/>
<text x="857.62" y="1236" font-size="28.26" fill="#1a1a1a" textLength="55.93" lengthAdjust="spacingAndGlyphs">2640</text>
<rect x="840.48" y="1259" width="90.3" height="54.8" fill="#c3c3c3"/>
<rect x="840.48" y="1259" width="90.3" height="2" fill="#a0a0a0"/>
<rect x="840.48" y="1259" width="2" height="54.8" fill="#a0a0a0"/>
<rect x="842.48" y="1261" width="86.3" height="2" fill="#6c6c6c"/>
<rect x="842.48" y="1261" width="2" height="50.8" fill="#6c6c6c"/>
<rect x="840.48" y="1311.8" width="90.3" height="2" fill="#f8f8f8"/>
<rect x="928.78" y="1259" width="2" height="54.8" fill="#f8f8f8"/>
<rect x="842.48" y="1309.8" width="86.3" height="2" fill="#d8d8d8"/>
<rect x="926.78" y="1261" width="2" height="50.8" fill="#d8d8d8"/>
<rect x="842.48" y="1297" width="86.3" height="16.8" fill="#f0f0f0"/>
<rect x="842.48" y="1311.5" width="86.3" height="2.3" fill="#9a9a9a"/>
<rect x="881.48" y="1297" width="3.5" height="16.8" fill="#a0a0a0"/>
<rect x="926.48" y="1297" width="2.3" height="16.8" fill="#9a9a9a"/>
<polygon points="860.08,1304.8 864.88,1301.8 864.88,1307.8" fill="#000"/>
<polygon points="906.98,1301.8 906.98,1307.8 911.78,1304.8" fill="#000"/>
<text x="868.9" y="1289.5" font-size="28.26" fill="#1a1a1a" textLength="34.01" lengthAdjust="spacingAndGlyphs">5.7</text>
<rect x="840.48" y="1332" width="88.3" height="44.4" rx="3" fill="url(#gbtn)"/>
<rect x="844.48" y="1334" width="80.3" height="2" fill="#4a4a4a" opacity="0.9"/>
<text x="864.37" y="1360.4" font-size="28.99" fill="#adadad" textLength="41.14" lengthAdjust="spacingAndGlyphs">Byp</text>
<rect x="947.15" y="869.6" width="89" height="46.4" rx="3" fill="url(#gbtn)"/>
<rect x="951.15" y="871.6" width="81" height="2" fill="#4a4a4a" opacity="0.9"/>
<text x="948.38" y="899" font-size="28.99" fill="#adadad" textLength="88.84" lengthAdjust="spacingAndGlyphs">Peaking</text>
<rect x="946.15" y="920.6" width="91.8" height="43.1" fill="#c3c3c3"/>
<rect x="946.15" y="920.6" width="91.8" height="2" fill="#a0a0a0"/>
<rect x="946.15" y="920.6" width="2" height="43.1" fill="#a0a0a0"/>
<rect x="948.15" y="922.6" width="87.8" height="2" fill="#6c6c6c"/>
<rect x="948.15" y="922.6" width="2" height="39.1" fill="#6c6c6c"/>
<rect x="946.15" y="961.7" width="91.8" height="2" fill="#f8f8f8"/>
<rect x="1035.95" y="920.6" width="2" height="43.1" fill="#f8f8f8"/>
<rect x="948.15" y="959.7" width="87.8" height="2" fill="#d8d8d8"/>
<rect x="1033.95" y="922.6" width="2" height="39.1" fill="#d8d8d8"/>
<text x="971.45" y="951.7" font-size="28.26" fill="#1a1a1a" textLength="41.95" lengthAdjust="spacingAndGlyphs">-4.5</text>
<rect x="954.15" y="993.7" width="14" height="3" fill="#050505"/>
<rect x="1017.85" y="993.7" width="13.8" height="3" fill="#050505"/>
<rect x="954.15" y="1023.4" width="14" height="3" fill="#050505"/>
<rect x="1017.85" y="1023.4" width="13.8" height="3" fill="#050505"/>
<rect x="954.15" y="1053.1" width="14" height="3" fill="#050505"/>
<rect x="1017.85" y="1053.1" width="13.8" height="3" fill="#050505"/>
<rect x="954.15" y="1082.8" width="14" height="3" fill="#050505"/>
<rect x="1017.85" y="1082.8" width="13.8" height="3" fill="#050505"/>
<rect x="954.15" y="1112.5" width="14" height="3" fill="#050505"/>
<rect x="1017.85" y="1112.5" width="13.8" height="3" fill="#050505"/>
<rect x="954.15" y="1142.2" width="14" height="3" fill="#050505"/>
<rect x="1017.85" y="1142.2" width="13.8" height="3" fill="#050505"/>
<rect x="954.15" y="1171.9" width="14" height="3" fill="#050505"/>
<rect x="1017.85" y="1171.9" width="13.8" height="3" fill="#050505"/>
<rect x="991.65" y="983.8" width="2" height="194.9" fill="#a0a0a0"/>
<rect x="976.55" y="1097" width="36.8" height="38.2" fill="#727272"/>
<rect x="978.55" y="1098.5" width="32.3" height="34.2" fill="#f6f6f6"/>
<rect x="981.05" y="1101" width="27.3" height="13.6" fill="url(#gthumb)"/>
<rect x="981.05" y="1117.6" width="27.3" height="12.6" fill="#ffffff"/>
<rect x="978.55" y="1114.6" width="32.3" height="3" fill="#505050"/>
<rect x="947.15" y="1205.4" width="90.3" height="42.4" fill="#c3c3c3"/>
<rect x="947.15" y="1205.4" width="90.3" height="2" fill="#a0a0a0"/>
<rect x="947.15" y="1205.4" width="2" height="42.4" fill="#a0a0a0"/>
<rect x="949.15" y="1207.4" width="86.3" height="2" fill="#6c6c6c"/>
<rect x="949.15" y="1207.4" width="2" height="38.4" fill="#6c6c6c"/>
<rect x="947.15" y="1245.8" width="90.3" height="2" fill="#f8f8f8"/>
<rect x="1035.45" y="1205.4" width="2" height="42.4" fill="#f8f8f8"/>
<rect x="949.15" y="1243.8" width="86.3" height="2" fill="#d8d8d8"/>
<rect x="1033.45" y="1207.4" width="2" height="38.4" fill="#d8d8d8"/>
<text x="964.55" y="1236" font-size="28.26" fill="#1a1a1a" textLength="55.67" lengthAdjust="spacingAndGlyphs">3420</text>
<rect x="947.15" y="1259" width="90.3" height="54.8" fill="#c3c3c3"/>
<rect x="947.15" y="1259" width="90.3" height="2" fill="#a0a0a0"/>
<rect x="947.15" y="1259" width="2" height="54.8" fill="#a0a0a0"/>
<rect x="949.15" y="1261" width="86.3" height="2" fill="#6c6c6c"/>
<rect x="949.15" y="1261" width="2" height="50.8" fill="#6c6c6c"/>
<rect x="947.15" y="1311.8" width="90.3" height="2" fill="#f8f8f8"/>
<rect x="1035.45" y="1259" width="2" height="54.8" fill="#f8f8f8"/>
<rect x="949.15" y="1309.8" width="86.3" height="2" fill="#d8d8d8"/>
<rect x="1033.45" y="1261" width="2" height="50.8" fill="#d8d8d8"/>
<rect x="949.15" y="1297" width="86.3" height="16.8" fill="#f0f0f0"/>
<rect x="949.15" y="1311.5" width="86.3" height="2.3" fill="#9a9a9a"/>
<rect x="988.15" y="1297" width="3.5" height="16.8" fill="#a0a0a0"/>
<rect x="1033.15" y="1297" width="2.3" height="16.8" fill="#9a9a9a"/>
<polygon points="966.75,1304.8 971.55,1301.8 971.55,1307.8" fill="#000"/>
<polygon points="1013.65,1301.8 1013.65,1307.8 1018.45,1304.8" fill="#000"/>
<text x="985.25" y="1289.5" font-size="28.26" fill="#1a1a1a" textLength="14.42" lengthAdjust="spacingAndGlyphs">2</text>
<rect x="947.15" y="1332" width="88.3" height="44.4" rx="3" fill="url(#gbtn)"/>
<rect x="951.15" y="1334" width="80.3" height="2" fill="#4a4a4a" opacity="0.9"/>
<text x="971.04" y="1360.4" font-size="28.99" fill="#adadad" textLength="41.14" lengthAdjust="spacingAndGlyphs">Byp</text>
<rect x="1053.82" y="869.6" width="89" height="46.4" rx="3" fill="url(#gbtn)"/>
<rect x="1057.82" y="871.6" width="81" height="2" fill="#4a4a4a" opacity="0.9"/>
<text x="1061.04" y="899" font-size="28.99" fill="#adadad" textLength="71.86" lengthAdjust="spacingAndGlyphs">HiSh Q</text>
<rect x="1052.82" y="920.6" width="91.8" height="43.1" fill="#c3c3c3"/>
<rect x="1052.82" y="920.6" width="91.8" height="2" fill="#a0a0a0"/>
<rect x="1052.82" y="920.6" width="2" height="43.1" fill="#a0a0a0"/>
<rect x="1054.82" y="922.6" width="87.8" height="2" fill="#6c6c6c"/>
<rect x="1054.82" y="922.6" width="2" height="39.1" fill="#6c6c6c"/>
<rect x="1052.82" y="961.7" width="91.8" height="2" fill="#f8f8f8"/>
<rect x="1142.62" y="920.6" width="2" height="43.1" fill="#f8f8f8"/>
<rect x="1054.82" y="959.7" width="87.8" height="2" fill="#d8d8d8"/>
<rect x="1140.62" y="922.6" width="2" height="39.1" fill="#d8d8d8"/>
<text x="1092.75" y="951.7" font-size="28.26" fill="#1a1a1a" textLength="13" lengthAdjust="spacingAndGlyphs">4</text>
<rect x="1060.82" y="993.7" width="14" height="3" fill="#050505"/>
<rect x="1124.52" y="993.7" width="13.8" height="3" fill="#050505"/>
<rect x="1060.82" y="1023.4" width="14" height="3" fill="#050505"/>
<rect x="1124.52" y="1023.4" width="13.8" height="3" fill="#050505"/>
<rect x="1060.82" y="1053.1" width="14" height="3" fill="#050505"/>
<rect x="1124.52" y="1053.1" width="13.8" height="3" fill="#050505"/>
<rect x="1060.82" y="1082.8" width="14" height="3" fill="#050505"/>
<rect x="1124.52" y="1082.8" width="13.8" height="3" fill="#050505"/>
<rect x="1060.82" y="1112.5" width="14" height="3" fill="#050505"/>
<rect x="1124.52" y="1112.5" width="13.8" height="3" fill="#050505"/>
<rect x="1060.82" y="1142.2" width="14" height="3" fill="#050505"/>
<rect x="1124.52" y="1142.2" width="13.8" height="3" fill="#050505"/>
<rect x="1060.82" y="1171.9" width="14" height="3" fill="#050505"/>
<rect x="1124.52" y="1171.9" width="13.8" height="3" fill="#050505"/>
<rect x="1098.32" y="983.8" width="2" height="194.9" fill="#a0a0a0"/>
<rect x="1083.22" y="1034.7" width="36.8" height="38.2" fill="#727272"/>
<rect x="1085.22" y="1036.2" width="32.3" height="34.2" fill="#f6f6f6"/>
<rect x="1087.72" y="1038.7" width="27.3" height="13.6" fill="url(#gthumb)"/>
<rect x="1087.72" y="1055.3" width="27.3" height="12.6" fill="#ffffff"/>
<rect x="1085.22" y="1052.3" width="32.3" height="3" fill="#505050"/>
<rect x="1053.82" y="1205.4" width="90.3" height="42.4" fill="#c3c3c3"/>
<rect x="1053.82" y="1205.4" width="90.3" height="2" fill="#a0a0a0"/>
<rect x="1053.82" y="1205.4" width="2" height="42.4" fill="#a0a0a0"/>
<rect x="1055.82" y="1207.4" width="86.3" height="2" fill="#6c6c6c"/>
<rect x="1055.82" y="1207.4" width="2" height="38.4" fill="#6c6c6c"/>
<rect x="1053.82" y="1245.8" width="90.3" height="2" fill="#f8f8f8"/>
<rect x="1142.12" y="1205.4" width="2" height="42.4" fill="#f8f8f8"/>
<rect x="1055.82" y="1243.8" width="86.3" height="2" fill="#d8d8d8"/>
<rect x="1140.12" y="1207.4" width="2" height="38.4" fill="#d8d8d8"/>
<text x="1070.96" y="1236" font-size="28.26" fill="#1a1a1a" textLength="55.93" lengthAdjust="spacingAndGlyphs">6000</text>
<rect x="1053.82" y="1259" width="90.3" height="54.8" fill="#c3c3c3"/>
<rect x="1053.82" y="1259" width="90.3" height="2" fill="#a0a0a0"/>
<rect x="1053.82" y="1259" width="2" height="54.8" fill="#a0a0a0"/>
<rect x="1055.82" y="1261" width="86.3" height="2" fill="#6c6c6c"/>
<rect x="1055.82" y="1261" width="2" height="50.8" fill="#6c6c6c"/>
<rect x="1053.82" y="1311.8" width="90.3" height="2" fill="#f8f8f8"/>
<rect x="1142.12" y="1259" width="2" height="54.8" fill="#f8f8f8"/>
<rect x="1055.82" y="1309.8" width="86.3" height="2" fill="#d8d8d8"/>
<rect x="1140.12" y="1261" width="2" height="50.8" fill="#d8d8d8"/>
<rect x="1055.82" y="1297" width="86.3" height="16.8" fill="#f0f0f0"/>
<rect x="1055.82" y="1311.5" width="86.3" height="2.3" fill="#9a9a9a"/>
<rect x="1094.82" y="1297" width="3.5" height="16.8" fill="#a0a0a0"/>
<rect x="1139.82" y="1297" width="2.3" height="16.8" fill="#9a9a9a"/>
<polygon points="1073.42,1304.8 1078.22,1301.8 1078.22,1307.8" fill="#000"/>
<polygon points="1120.32,1301.8 1120.32,1307.8 1125.12,1304.8" fill="#000"/>
<text x="1091.84" y="1289.5" font-size="28.26" fill="#1a1a1a" textLength="10.23" lengthAdjust="spacingAndGlyphs">1</text>
<rect x="1053.82" y="1332" width="88.3" height="44.4" rx="3" fill="url(#gbtn)"/>
<rect x="1057.82" y="1334" width="80.3" height="2" fill="#4a4a4a" opacity="0.9"/>
<text x="1077.71" y="1360.4" font-size="28.99" fill="#adadad" textLength="41.14" lengthAdjust="spacingAndGlyphs">Byp</text>
<rect x="1604" y="846.25" width="15" height="1" fill="#9a9a9a"/>
<rect x="1810.6" y="846.25" width="364.4" height="1" fill="#9a9a9a"/>
<rect x="1604" y="1384" width="571" height="1" fill="#9a9a9a"/>
<rect x="1604" y="846.25" width="1" height="538.75" fill="#9a9a9a"/>
<rect x="2174" y="846.25" width="1" height="538.75" fill="#9a9a9a"/>
<rect x="1604.8" y="847.05" width="14.2" height="2.7" fill="#eeeeee"/>
<rect x="1810.6" y="847.05" width="363.6" height="2.7" fill="#eeeeee"/>
<rect x="1604.8" y="1381.5" width="569.4" height="2.7" fill="#eeeeee"/>
<rect x="1604.8" y="847.05" width="2.7" height="537.15" fill="#eeeeee"/>
<rect x="2171.5" y="847.05" width="2.7" height="537.15" fill="#eeeeee"/>
<rect x="1607.5" y="849.75" width="11.5" height="2" fill="#5a5a5a"/>
<rect x="1810.6" y="849.75" width="360.9" height="2" fill="#5a5a5a"/>
<rect x="1607.5" y="1379.5" width="564" height="2" fill="#5a5a5a"/>
<rect x="1607.5" y="849.75" width="2" height="531.75" fill="#5a5a5a"/>
<rect x="2169.5" y="849.75" width="2" height="531.75" fill="#5a5a5a"/>
<text x="1623.16" y="857.5" font-size="28.99" fill="#adadad" textLength="182.81" lengthAdjust="spacingAndGlyphs">RMS Compressor</text>
<rect x="1638.75" y="885.6" width="91.25" height="42.4" fill="#c3c3c3"/>
<rect x="1638.75" y="885.6" width="91.25" height="2" fill="#a0a0a0"/>
<rect x="1638.75" y="885.6" width="2" height="42.4" fill="#a0a0a0"/>
<rect x="1640.75" y="887.6" width="87.25" height="2" fill="#6c6c6c"/>
<rect x="1640.75" y="887.6" width="2" height="38.4" fill="#6c6c6c"/>
<rect x="1638.75" y="926" width="91.25" height="2" fill="#f8f8f8"/>
<rect x="1728" y="885.6" width="2" height="42.4" fill="#f8f8f8"/>
<rect x="1640.75" y="924" width="87.25" height="2" fill="#d8d8d8"/>
<rect x="1726" y="887.6" width="2" height="38.4" fill="#d8d8d8"/>
<text x="1667.52" y="916.9" font-size="28.26" fill="#1a1a1a" textLength="34.27" lengthAdjust="spacingAndGlyphs">6.2</text>
<rect x="1646" y="976.5" width="16" height="3" fill="#050505"/>
<rect x="1715" y="976.5" width="15" height="3" fill="#050505"/>
<rect x="1646" y="1006.2" width="16" height="3" fill="#050505"/>
<rect x="1715" y="1006.2" width="15" height="3" fill="#050505"/>
<rect x="1646" y="1035.9" width="16" height="3" fill="#050505"/>
<rect x="1715" y="1035.9" width="15" height="3" fill="#050505"/>
<rect x="1646" y="1065.6" width="16" height="3" fill="#050505"/>
<rect x="1715" y="1065.6" width="15" height="3" fill="#050505"/>
<rect x="1646" y="1095.3" width="16" height="3" fill="#050505"/>
<rect x="1715" y="1095.3" width="15" height="3" fill="#050505"/>
<rect x="1646" y="1125" width="16" height="3" fill="#050505"/>
<rect x="1715" y="1125" width="15" height="3" fill="#050505"/>
<rect x="1646" y="1154.7" width="16" height="3" fill="#050505"/>
<rect x="1715" y="1154.7" width="15" height="3" fill="#050505"/>
<rect x="1646" y="1184.4" width="16" height="3" fill="#050505"/>
<rect x="1715" y="1184.4" width="15" height="3" fill="#050505"/>
<rect x="1646" y="1214.1" width="16" height="3" fill="#050505"/>
<rect x="1715" y="1214.1" width="15" height="3" fill="#050505"/>
<rect x="1646" y="1243.8" width="16" height="3" fill="#050505"/>
<rect x="1715" y="1243.8" width="15" height="3" fill="#050505"/>
<rect x="1646" y="1273.5" width="16" height="3" fill="#050505"/>
<rect x="1715" y="1273.5" width="15" height="3" fill="#050505"/>
<rect x="1688" y="965.6" width="2" height="315.2" fill="#a0a0a0"/>
<rect x="1671" y="1052.3" width="37" height="38" fill="#727272"/>
<rect x="1673" y="1053.8" width="32.5" height="34" fill="#f6f6f6"/>
<rect x="1675.5" y="1056.3" width="27.5" height="13.5" fill="url(#gthumb)"/>
<rect x="1675.5" y="1072.8" width="27.5" height="12.5" fill="#ffffff"/>
<rect x="1673" y="1069.8" width="32.5" height="3" fill="#505050"/>
<text x="1665.54" y="1336.5" font-size="28.99" fill="#adadad" textLength="34.63" lengthAdjust="spacingAndGlyphs">Thr</text>
<text x="1657.27" y="1365" font-size="28.99" fill="#adadad" textLength="57.58" lengthAdjust="spacingAndGlyphs">[dBu]</text>
<rect x="1745.6" y="885.6" width="91.25" height="42.4" fill="#c3c3c3"/>
<rect x="1745.6" y="885.6" width="91.25" height="2" fill="#a0a0a0"/>
<rect x="1745.6" y="885.6" width="2" height="42.4" fill="#a0a0a0"/>
<rect x="1747.6" y="887.6" width="87.25" height="2" fill="#6c6c6c"/>
<rect x="1747.6" y="887.6" width="2" height="38.4" fill="#6c6c6c"/>
<rect x="1745.6" y="926" width="91.25" height="2" fill="#f8f8f8"/>
<rect x="1834.85" y="885.6" width="2" height="42.4" fill="#f8f8f8"/>
<rect x="1747.6" y="924" width="87.25" height="2" fill="#d8d8d8"/>
<rect x="1832.85" y="887.6" width="2" height="38.4" fill="#d8d8d8"/>
<text x="1760.9" y="916.9" font-size="28.26" fill="#1a1a1a" textLength="56.78" lengthAdjust="spacingAndGlyphs">100:1</text>
<rect x="1753" y="976.5" width="16" height="3" fill="#050505"/>
<rect x="1822" y="976.5" width="15" height="3" fill="#050505"/>
<rect x="1753" y="1006.2" width="16" height="3" fill="#050505"/>
<rect x="1822" y="1006.2" width="15" height="3" fill="#050505"/>
<rect x="1753" y="1035.9" width="16" height="3" fill="#050505"/>
<rect x="1822" y="1035.9" width="15" height="3" fill="#050505"/>
<rect x="1753" y="1065.6" width="16" height="3" fill="#050505"/>
<rect x="1822" y="1065.6" width="15" height="3" fill="#050505"/>
<rect x="1753" y="1095.3" width="16" height="3" fill="#050505"/>
<rect x="1822" y="1095.3" width="15" height="3" fill="#050505"/>
<rect x="1753" y="1125" width="16" height="3" fill="#050505"/>
<rect x="1822" y="1125" width="15" height="3" fill="#050505"/>
<rect x="1753" y="1154.7" width="16" height="3" fill="#050505"/>
<rect x="1822" y="1154.7" width="15" height="3" fill="#050505"/>
<rect x="1753" y="1184.4" width="16" height="3" fill="#050505"/>
<rect x="1822" y="1184.4" width="15" height="3" fill="#050505"/>
<rect x="1753" y="1214.1" width="16" height="3" fill="#050505"/>
<rect x="1822" y="1214.1" width="15" height="3" fill="#050505"/>
<rect x="1753" y="1243.8" width="16" height="3" fill="#050505"/>
<rect x="1822" y="1243.8" width="15" height="3" fill="#050505"/>
<rect x="1753" y="1273.5" width="16" height="3" fill="#050505"/>
<rect x="1822" y="1273.5" width="15" height="3" fill="#050505"/>
<rect x="1795" y="965.6" width="2" height="315.2" fill="#a0a0a0"/>
<rect x="1778" y="954.4" width="37" height="38" fill="#727272"/>
<rect x="1780" y="955.9" width="32.5" height="34" fill="#f6f6f6"/>
<rect x="1782.5" y="958.4" width="27.5" height="13.5" fill="url(#gthumb)"/>
<rect x="1782.5" y="974.9" width="27.5" height="12.5" fill="#ffffff"/>
<rect x="1780" y="971.9" width="32.5" height="3" fill="#505050"/>
<text x="1766.99" y="1336.5" font-size="28.99" fill="#adadad" textLength="58.6" lengthAdjust="spacingAndGlyphs">Ratio</text>
<text x="1760.27" y="1365" font-size="28.99" fill="#adadad" textLength="81.27" lengthAdjust="spacingAndGlyphs">[In:Out]</text>
<rect x="1852.45" y="885.6" width="91.25" height="42.4" fill="#c3c3c3"/>
<rect x="1852.45" y="885.6" width="91.25" height="2" fill="#a0a0a0"/>
<rect x="1852.45" y="885.6" width="2" height="42.4" fill="#a0a0a0"/>
<rect x="1854.45" y="887.6" width="87.25" height="2" fill="#6c6c6c"/>
<rect x="1854.45" y="887.6" width="2" height="38.4" fill="#6c6c6c"/>
<rect x="1852.45" y="926" width="91.25" height="2" fill="#f8f8f8"/>
<rect x="1941.7" y="885.6" width="2" height="42.4" fill="#f8f8f8"/>
<rect x="1854.45" y="924" width="87.25" height="2" fill="#d8d8d8"/>
<rect x="1939.7" y="887.6" width="2" height="38.4" fill="#d8d8d8"/>
<text x="1891.47" y="916.9" font-size="28.26" fill="#1a1a1a" textLength="13.67" lengthAdjust="spacingAndGlyphs">0</text>
<rect x="1860" y="976.5" width="16" height="3" fill="#050505"/>
<rect x="1929" y="976.5" width="15" height="3" fill="#050505"/>
<rect x="1860" y="1006.2" width="16" height="3" fill="#050505"/>
<rect x="1929" y="1006.2" width="15" height="3" fill="#050505"/>
<rect x="1860" y="1035.9" width="16" height="3" fill="#050505"/>
<rect x="1929" y="1035.9" width="15" height="3" fill="#050505"/>
<rect x="1860" y="1065.6" width="16" height="3" fill="#050505"/>
<rect x="1929" y="1065.6" width="15" height="3" fill="#050505"/>
<rect x="1860" y="1095.3" width="16" height="3" fill="#050505"/>
<rect x="1929" y="1095.3" width="15" height="3" fill="#050505"/>
<rect x="1860" y="1125" width="16" height="3" fill="#050505"/>
<rect x="1929" y="1125" width="15" height="3" fill="#050505"/>
<rect x="1860" y="1154.7" width="16" height="3" fill="#050505"/>
<rect x="1929" y="1154.7" width="15" height="3" fill="#050505"/>
<rect x="1860" y="1184.4" width="16" height="3" fill="#050505"/>
<rect x="1929" y="1184.4" width="15" height="3" fill="#050505"/>
<rect x="1860" y="1214.1" width="16" height="3" fill="#050505"/>
<rect x="1929" y="1214.1" width="15" height="3" fill="#050505"/>
<rect x="1860" y="1243.8" width="16" height="3" fill="#050505"/>
<rect x="1929" y="1243.8" width="15" height="3" fill="#050505"/>
<rect x="1860" y="1273.5" width="16" height="3" fill="#050505"/>
<rect x="1929" y="1273.5" width="15" height="3" fill="#050505"/>
<rect x="1902" y="965.6" width="2" height="315.2" fill="#a0a0a0"/>
<rect x="1885" y="1255.5" width="37" height="38" fill="#727272"/>
<rect x="1887" y="1257" width="32.5" height="34" fill="#f6f6f6"/>
<rect x="1889.5" y="1259.5" width="27.5" height="13.5" fill="url(#gthumb)"/>
<rect x="1889.5" y="1276" width="27.5" height="12.5" fill="#ffffff"/>
<rect x="1887" y="1273" width="32.5" height="3" fill="#505050"/>
<text x="1878.05" y="1336.5" font-size="28.99" fill="#adadad" textLength="57.07" lengthAdjust="spacingAndGlyphs">Knee</text>
<text x="1889.33" y="1365" font-size="28.99" fill="#adadad" textLength="34.45" lengthAdjust="spacingAndGlyphs">[%]</text>
<rect x="1959.3" y="885.6" width="91.25" height="42.4" fill="#c3c3c3"/>
<rect x="1959.3" y="885.6" width="91.25" height="2" fill="#a0a0a0"/>
<rect x="1959.3" y="885.6" width="2" height="42.4" fill="#a0a0a0"/>
<rect x="1961.3" y="887.6" width="87.25" height="2" fill="#6c6c6c"/>
<rect x="1961.3" y="887.6" width="2" height="38.4" fill="#6c6c6c"/>
<rect x="1959.3" y="926" width="91.25" height="2" fill="#f8f8f8"/>
<rect x="2048.55" y="885.6" width="2" height="42.4" fill="#f8f8f8"/>
<rect x="1961.3" y="924" width="87.25" height="2" fill="#d8d8d8"/>
<rect x="2046.55" y="887.6" width="2" height="38.4" fill="#d8d8d8"/>
<text x="1988.32" y="916.9" font-size="28.26" fill="#1a1a1a" textLength="34.01" lengthAdjust="spacingAndGlyphs">0.2</text>
<rect x="1966" y="976.5" width="16" height="3" fill="#050505"/>
<rect x="2035" y="976.5" width="15" height="3" fill="#050505"/>
<rect x="1966" y="1006.2" width="16" height="3" fill="#050505"/>
<rect x="2035" y="1006.2" width="15" height="3" fill="#050505"/>
<rect x="1966" y="1035.9" width="16" height="3" fill="#050505"/>
<rect x="2035" y="1035.9" width="15" height="3" fill="#050505"/>
<rect x="1966" y="1065.6" width="16" height="3" fill="#050505"/>
<rect x="2035" y="1065.6" width="15" height="3" fill="#050505"/>
<rect x="1966" y="1095.3" width="16" height="3" fill="#050505"/>
<rect x="2035" y="1095.3" width="15" height="3" fill="#050505"/>
<rect x="1966" y="1125" width="16" height="3" fill="#050505"/>
<rect x="2035" y="1125" width="15" height="3" fill="#050505"/>
<rect x="1966" y="1154.7" width="16" height="3" fill="#050505"/>
<rect x="2035" y="1154.7" width="15" height="3" fill="#050505"/>
<rect x="1966" y="1184.4" width="16" height="3" fill="#050505"/>
<rect x="2035" y="1184.4" width="15" height="3" fill="#050505"/>
<rect x="1966" y="1214.1" width="16" height="3" fill="#050505"/>
<rect x="2035" y="1214.1" width="15" height="3" fill="#050505"/>
<rect x="1966" y="1243.8" width="16" height="3" fill="#050505"/>
<rect x="2035" y="1243.8" width="15" height="3" fill="#050505"/>
<rect x="1966" y="1273.5" width="16" height="3" fill="#050505"/>
<rect x="2035" y="1273.5" width="15" height="3" fill="#050505"/>
<rect x="2008" y="965.6" width="2" height="315.2" fill="#a0a0a0"/>
<rect x="1991" y="1245.4" width="37" height="38" fill="#727272"/>
<rect x="1993" y="1246.9" width="32.5" height="34" fill="#f6f6f6"/>
<rect x="1995.5" y="1249.4" width="27.5" height="13.5" fill="url(#gthumb)"/>
<rect x="1995.5" y="1265.9" width="27.5" height="12.5" fill="#ffffff"/>
<rect x="1993" y="1262.9" width="32.5" height="3" fill="#505050"/>
<text x="1964.05" y="1336.5" font-size="28.99" fill="#adadad" textLength="89.42" lengthAdjust="spacingAndGlyphs">Release</text>
<text x="1986.13" y="1365" font-size="28.99" fill="#adadad" textLength="56.28" lengthAdjust="spacingAndGlyphs">[sec]</text>
<rect x="2066.15" y="885.6" width="91.25" height="42.4" fill="#c3c3c3"/>
<rect x="2066.15" y="885.6" width="91.25" height="2" fill="#a0a0a0"/>
<rect x="2066.15" y="885.6" width="2" height="42.4" fill="#a0a0a0"/>
<rect x="2068.15" y="887.6" width="87.25" height="2" fill="#6c6c6c"/>
<rect x="2068.15" y="887.6" width="2" height="38.4" fill="#6c6c6c"/>
<rect x="2066.15" y="926" width="91.25" height="2" fill="#f8f8f8"/>
<rect x="2155.4" y="885.6" width="2" height="42.4" fill="#f8f8f8"/>
<rect x="2068.15" y="924" width="87.25" height="2" fill="#d8d8d8"/>
<rect x="2153.4" y="887.6" width="2" height="38.4" fill="#d8d8d8"/>
<text x="2105.16" y="916.9" font-size="28.26" fill="#1a1a1a" textLength="13.82" lengthAdjust="spacingAndGlyphs">5</text>
<rect x="2072.5" y="976.5" width="16" height="3" fill="#050505"/>
<rect x="2141.5" y="976.5" width="15" height="3" fill="#050505"/>
<rect x="2072.5" y="1006.2" width="16" height="3" fill="#050505"/>
<rect x="2141.5" y="1006.2" width="15" height="3" fill="#050505"/>
<rect x="2072.5" y="1035.9" width="16" height="3" fill="#050505"/>
<rect x="2141.5" y="1035.9" width="15" height="3" fill="#050505"/>
<rect x="2072.5" y="1065.6" width="16" height="3" fill="#050505"/>
<rect x="2141.5" y="1065.6" width="15" height="3" fill="#050505"/>
<rect x="2072.5" y="1095.3" width="16" height="3" fill="#050505"/>
<rect x="2141.5" y="1095.3" width="15" height="3" fill="#050505"/>
<rect x="2072.5" y="1125" width="16" height="3" fill="#050505"/>
<rect x="2141.5" y="1125" width="15" height="3" fill="#050505"/>
<rect x="2072.5" y="1154.7" width="16" height="3" fill="#050505"/>
<rect x="2141.5" y="1154.7" width="15" height="3" fill="#050505"/>
<rect x="2072.5" y="1184.4" width="16" height="3" fill="#050505"/>
<rect x="2141.5" y="1184.4" width="15" height="3" fill="#050505"/>
<rect x="2072.5" y="1214.1" width="16" height="3" fill="#050505"/>
<rect x="2141.5" y="1214.1" width="15" height="3" fill="#050505"/>
<rect x="2072.5" y="1243.8" width="16" height="3" fill="#050505"/>
<rect x="2141.5" y="1243.8" width="15" height="3" fill="#050505"/>
<rect x="2072.5" y="1273.5" width="16" height="3" fill="#050505"/>
<rect x="2141.5" y="1273.5" width="15" height="3" fill="#050505"/>
<rect x="2114.5" y="965.6" width="2" height="315.2" fill="#a0a0a0"/>
<rect x="2097.5" y="1255.5" width="37" height="38" fill="#727272"/>
<rect x="2099.5" y="1257" width="32.5" height="34" fill="#f6f6f6"/>
<rect x="2102" y="1259.5" width="27.5" height="13.5" fill="url(#gthumb)"/>
<rect x="2102" y="1276" width="27.5" height="12.5" fill="#ffffff"/>
<rect x="2099.5" y="1273" width="32.5" height="3" fill="#505050"/>
<text x="2084.4" y="1336.5" font-size="28.99" fill="#adadad" textLength="69.17" lengthAdjust="spacingAndGlyphs">Attack</text>
<text x="2097.91" y="1365" font-size="28.99" fill="#adadad" textLength="45.67" lengthAdjust="spacingAndGlyphs">[ms]</text>
<rect x="2190.5" y="848" width="14.5" height="1" fill="#9a9a9a"/>
<rect x="2260" y="848" width="92" height="1" fill="#9a9a9a"/>
<rect x="2190.5" y="1384" width="161.5" height="1" fill="#9a9a9a"/>
<rect x="2190.5" y="848" width="1" height="537" fill="#9a9a9a"/>
<rect x="2351" y="848" width="1" height="537" fill="#9a9a9a"/>
<rect x="2191.3" y="848.8" width="13.7" height="2.7" fill="#eeeeee"/>
<rect x="2260" y="848.8" width="91.2" height="2.7" fill="#eeeeee"/>
<rect x="2191.3" y="1381.5" width="159.9" height="2.7" fill="#eeeeee"/>
<rect x="2191.3" y="848.8" width="2.7" height="535.4" fill="#eeeeee"/>
<rect x="2348.5" y="848.8" width="2.7" height="535.4" fill="#eeeeee"/>
<rect x="2194" y="851.5" width="11" height="2" fill="#5a5a5a"/>
<rect x="2260" y="851.5" width="88.5" height="2" fill="#5a5a5a"/>
<rect x="2194" y="1379.5" width="154.5" height="2" fill="#5a5a5a"/>
<rect x="2194" y="851.5" width="2" height="530" fill="#5a5a5a"/>
<rect x="2346.5" y="851.5" width="2" height="530" fill="#5a5a5a"/>
<text x="2209.45" y="858" font-size="28.99" fill="#c0c0c0" font-weight="bold" textLength="46.36" lengthAdjust="spacingAndGlyphs">DLF</text>
<rect x="2226" y="868.4" width="89.6" height="40.5" fill="#c3c3c3"/>
<rect x="2226" y="868.4" width="89.6" height="2" fill="#a0a0a0"/>
<rect x="2226" y="868.4" width="2" height="40.5" fill="#a0a0a0"/>
<rect x="2228" y="870.4" width="85.6" height="2" fill="#6c6c6c"/>
<rect x="2228" y="870.4" width="2" height="36.5" fill="#6c6c6c"/>
<rect x="2226" y="906.9" width="89.6" height="2" fill="#f8f8f8"/>
<rect x="2313.6" y="868.4" width="2" height="40.5" fill="#f8f8f8"/>
<rect x="2228" y="904.9" width="85.6" height="2" fill="#d8d8d8"/>
<rect x="2311.6" y="870.4" width="2" height="36.5" fill="#d8d8d8"/>
<text x="2263.82" y="898" font-size="28.26" fill="#1a1a1a" textLength="13.67" lengthAdjust="spacingAndGlyphs">0</text>
<rect x="2233" y="940.5" width="13.4" height="3" fill="#050505"/>
<rect x="2295.4" y="940.5" width="13.5" height="3" fill="#050505"/>
<rect x="2233" y="970.2" width="13.4" height="3" fill="#050505"/>
<rect x="2295.4" y="970.2" width="13.5" height="3" fill="#050505"/>
<rect x="2233" y="999.9" width="13.4" height="3" fill="#050505"/>
<rect x="2295.4" y="999.9" width="13.5" height="3" fill="#050505"/>
<rect x="2233" y="1029.6" width="13.4" height="3" fill="#050505"/>
<rect x="2295.4" y="1029.6" width="13.5" height="3" fill="#050505"/>
<rect x="2233" y="1059.3" width="13.4" height="3" fill="#050505"/>
<rect x="2295.4" y="1059.3" width="13.5" height="3" fill="#050505"/>
<rect x="2233" y="1089" width="13.4" height="3" fill="#050505"/>
<rect x="2295.4" y="1089" width="13.5" height="3" fill="#050505"/>
<rect x="2233" y="1118.7" width="13.4" height="3" fill="#050505"/>
<rect x="2295.4" y="1118.7" width="13.5" height="3" fill="#050505"/>
<rect x="2270" y="930" width="2" height="193.9" fill="#a0a0a0"/>
<rect x="2254.9" y="921.7" width="35.4" height="36.1" fill="#727272"/>
<rect x="2256.9" y="923.2" width="30.9" height="32.1" fill="#f6f6f6"/>
<rect x="2259.4" y="925.7" width="25.9" height="12.55" fill="url(#gthumb)"/>
<rect x="2259.4" y="941.25" width="25.9" height="11.55" fill="#ffffff"/>
<rect x="2256.9" y="938.25" width="30.9" height="3" fill="#505050"/>
<text x="2231" y="1177.9" font-size="28.99" fill="#adadad" textLength="81.45" lengthAdjust="spacingAndGlyphs">Att [dB]</text>
<rect x="2226" y="1206.6" width="89.6" height="40.4" fill="#c3c3c3"/>
<rect x="2226" y="1206.6" width="89.6" height="2" fill="#a0a0a0"/>
<rect x="2226" y="1206.6" width="2" height="40.4" fill="#a0a0a0"/>
<rect x="2228" y="1208.6" width="85.6" height="2" fill="#6c6c6c"/>
<rect x="2228" y="1208.6" width="2" height="36.4" fill="#6c6c6c"/>
<rect x="2226" y="1245" width="89.6" height="2" fill="#f8f8f8"/>
<rect x="2313.6" y="1206.6" width="2" height="40.4" fill="#f8f8f8"/>
<rect x="2228" y="1243" width="85.6" height="2" fill="#d8d8d8"/>
<rect x="2311.6" y="1208.6" width="2" height="36.4" fill="#d8d8d8"/>
<text x="2249.64" y="1236.5" font-size="28.26" fill="#1a1a1a" textLength="42.03" lengthAdjust="spacingAndGlyphs">200</text>
<text x="2219.07" y="1275.7" font-size="28.99" fill="#adadad" textLength="100.36" lengthAdjust="spacingAndGlyphs">Freq [Hz}</text>
<rect x="2226" y="1294.3" width="89.6" height="55.7" fill="#c3c3c3"/>
<rect x="2226" y="1294.3" width="89.6" height="2" fill="#a0a0a0"/>
<rect x="2226" y="1294.3" width="2" height="55.7" fill="#a0a0a0"/>
<rect x="2228" y="1296.3" width="85.6" height="2" fill="#6c6c6c"/>
<rect x="2228" y="1296.3" width="2" height="51.7" fill="#6c6c6c"/>
<rect x="2226" y="1348" width="89.6" height="2" fill="#f8f8f8"/>
<rect x="2313.6" y="1294.3" width="2" height="55.7" fill="#f8f8f8"/>
<rect x="2228" y="1346" width="85.6" height="2" fill="#d8d8d8"/>
<rect x="2311.6" y="1296.3" width="2" height="51.7" fill="#d8d8d8"/>
<rect x="2228" y="1331.4" width="85.6" height="18.6" fill="#f0f0f0"/>
<rect x="2268" y="1331.4" width="3.5" height="18.6" fill="#a0a0a0"/>
<rect x="2228" y="1347.5" width="85.6" height="2.5" fill="#9a9a9a"/>
<polygon points="2245,1339 2250,1336 2250,1342" fill="#000"/>
<polygon points="2292,1336 2292,1342 2297,1339" fill="#000"/>
<text x="2254.47" y="1325" font-size="28.26" fill="#1a1a1a" textLength="34.14" lengthAdjust="spacingAndGlyphs">2.9</text>
<text x="2224.95" y="1370" font-size="28.99" fill="#adadad" textLength="91.12" lengthAdjust="spacingAndGlyphs">Q Factor</text>
</svg>
</body></html>
